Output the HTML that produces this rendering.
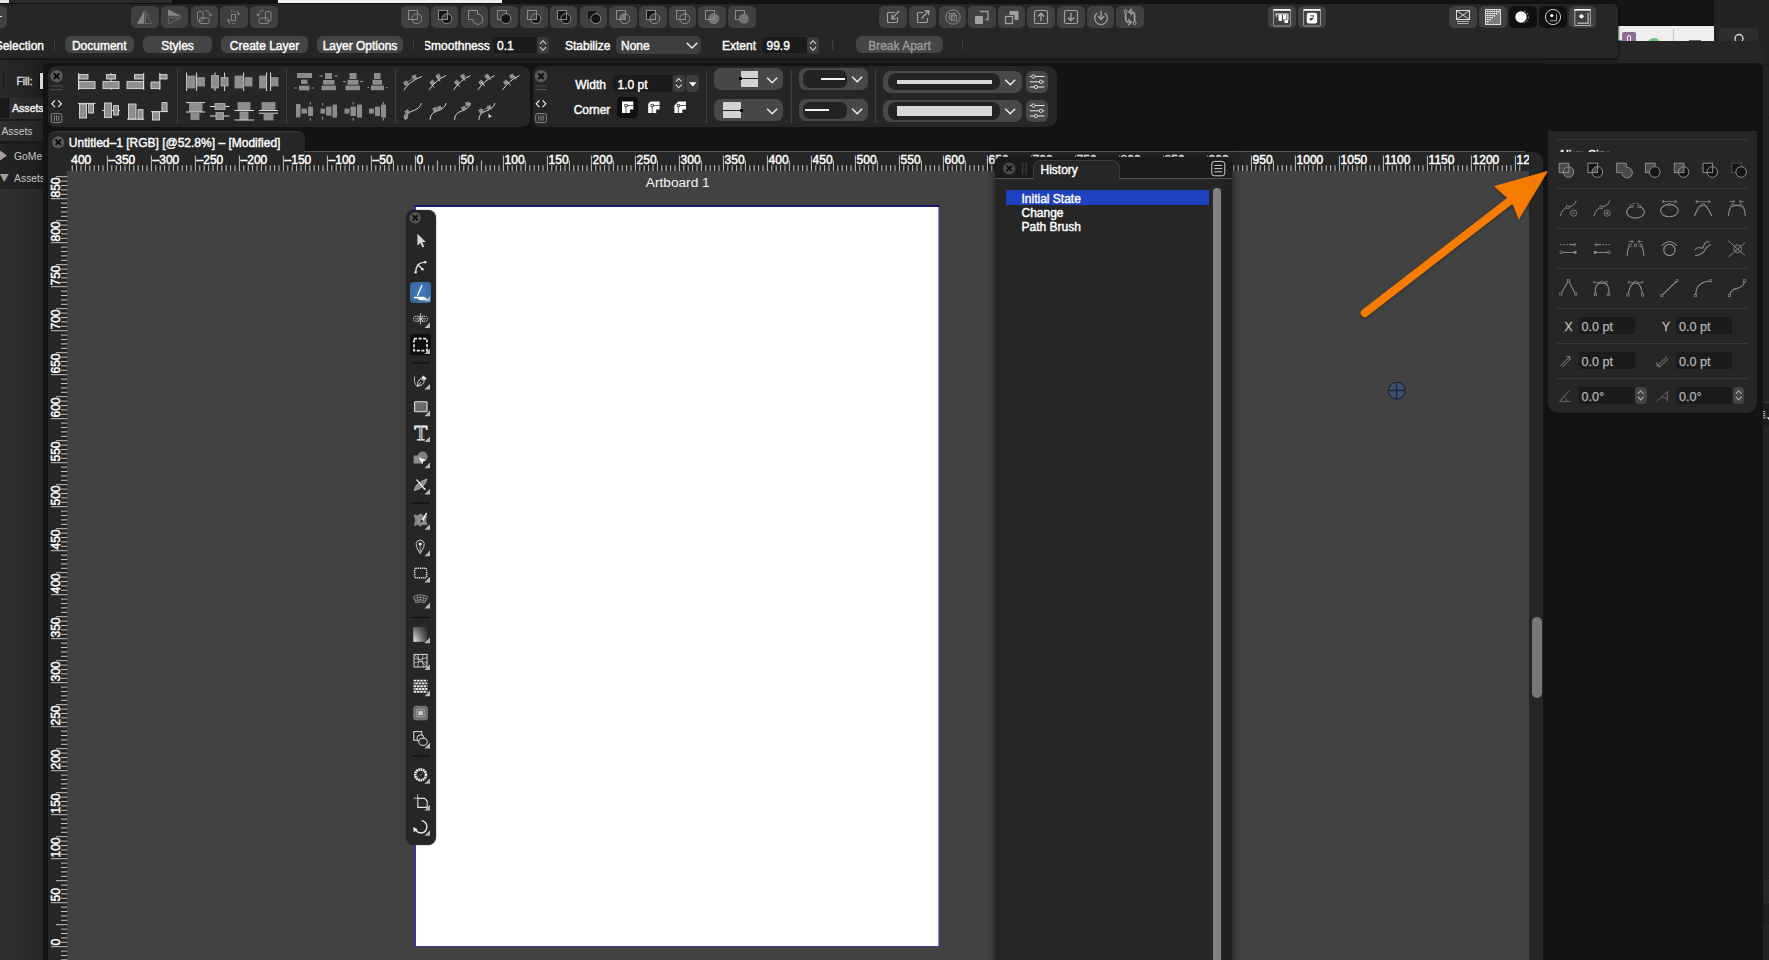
<!DOCTYPE html><html lang="en"><head><meta charset="utf-8"><title>Untitled-1</title><style>
*{box-sizing:border-box;margin:0;padding:0}
html,body{width:1769px;height:960px;overflow:hidden;background:#131313}
body{position:relative;font-family:"Liberation Sans","DejaVu Sans",sans-serif;font-size:12px;font-weight:normal;-webkit-text-stroke-width:.4px;color:#fff;line-height:1}
.a{position:absolute}
.t{position:absolute;white-space:nowrap;line-height:14px;height:14px}
svg{position:absolute;overflow:visible}
.btn{position:absolute;background:#3a3a3a;border-radius:5px}
.pill{position:absolute;background:#454545;border-radius:6px;text-align:center;line-height:14px;height:17px;padding-top:2.9px}
.fld{position:absolute;background:#1b1b1b;line-height:14px;padding-left:4px;padding-top:2.5px;overflow:hidden}
.sep{position:absolute;width:1px;background:#3e3e3e}
</style></head><body>
<div class="a" style="left:1714px;top:0px;width:55px;height:960px;background:#232323;"></div>
<div class="a" style="left:1763px;top:65px;width:6px;height:1px;background:#1a1a1a;"></div>
<div class="a" style="left:1763px;top:117px;width:6px;height:1px;background:#1a1a1a;"></div>
<div class="a" style="left:1763px;top:402px;width:6px;height:24px;background:#1c1c1c;border-top:1px solid #333"></div>
<div class="a" style="left:1763px;top:878px;width:6px;height:24px;background:#282828;border-top:1px solid #1a1a1a"></div>
<div class="a" style="left:1763px;top:902px;width:6px;height:22px;background:#202020;border-top:1px solid #2e2e2e;border-bottom:1px solid #181818"></div>
<div class="a" style="left:1719px;top:28px;width:39px;height:20px;background:#2e2e2e;border-radius:3px 3px 0 0"></div>
<svg style="left:1733px;top:32px" width="12" height="12"><circle cx="6" cy="6.5" r="4" fill="none" stroke="#ddd" stroke-width="1.3"/></svg>
<div class="a" style="left:1617px;top:0px;width:97px;height:26px;background:#151515;"></div>
<div class="a" style="left:1618px;top:25px;width:96px;height:17px;background:#efefef;border-top:1px solid #0c0c0c;overflow:hidden"><div class="a" style="left:4px;top:6px;width:14px;height:14px;background:#8a6c97;border-radius:2px"></div><div class="a" style="left:9px;top:9px;width:4px;height:9px;border:1.5px solid #fff;border-radius:2px"></div><div class="a" style="left:0;top:14px;width:4px;height:3px;background:#3aa0d8"></div><div class="a" style="left:29px;top:12px;width:14px;height:14px;background:#6cc07a;border-radius:7px"></div><div class="a" style="left:55px;top:3px;width:1px;height:14px;background:#c4c4c4"></div><div class="a" style="left:71px;top:14px;width:12px;height:3px;background:#666"></div></div>
<div class="a" style="left:1617px;top:41px;width:146px;height:22px;background:#262626;border-radius:0 6px 0 0"></div>
<div class="a" style="left:1543px;top:63px;width:220px;height:900px;background:#131313;border-radius:0 6px 0 0"></div>
<div class="a" style="left:0px;top:0px;width:1617px;height:4px;background:#121212;"></div>
<div class="a" style="left:0px;top:0px;width:172px;height:3px;background:#2a2a2a;"></div>
<div class="a" style="left:0px;top:0px;width:9px;height:3px;background:#e8e8e8;"></div>
<div class="a" style="left:278px;top:0px;width:224px;height:3px;background:#efefef;"></div>
<div class="a" style="left:0px;top:3.5px;width:1617.5px;height:55px;background:#262626;border-radius:0 5px 5px 0;box-shadow:1px 1px 2px rgba(0,0,0,.6)"></div>
<div class="a" style="left:0px;top:6px;width:7px;height:22px;background:#424242;border-radius:0 5px 5px 0"></div>
<div class="a" style="left:0px;top:15.5px;width:1.5px;height:1.5px;background:#ddd;"></div>
<div class="btn" style="left:131.1px;top:6px;width:27.6px;height:22px;background:#404040"><svg width="28" height="22" viewBox="0 0 28 22" style="left:0;top:0"><path d="M6,17.7 L13,5 L13,17.7Z" fill="#858585"/><path d="M14.5,5.2 L20.7,17.5 L14.5,17.5Z" fill="none" stroke="#666" stroke-width="1"/><path d="M13.7,4.5V18" stroke="#5a5a5a" stroke-width="1"/></svg></div>
<div class="btn" style="left:160.8px;top:6px;width:27.6px;height:22px;background:#404040"><svg width="28" height="22" viewBox="0 0 28 22" style="left:0;top:0"><path d="M7,3.6 L20,9.8 L7,9.8Z" fill="#858585"/><path d="M7.5,12 L19.5,12 L7.5,18Z" fill="none" stroke="#666" stroke-width="1"/><path d="M6,11H21" stroke="#5a5a5a" stroke-width="1"/></svg></div>
<div class="btn" style="left:190.6px;top:6px;width:27.6px;height:22px;background:#404040"><svg width="28" height="22" viewBox="0 0 28 22" style="left:0;top:0"><rect x="6.5" y="5.5" width="5.5" height="9.5" rx="1.5" fill="none" stroke="#858585"/><rect x="8.5" y="12" width="9.5" height="5.5" rx="1.5" fill="none" stroke="#858585"/><path d="M14,4.5 Q18.5,4.5 19.5,9.5" fill="none" stroke="#858585"/><path d="M17.7,8 L19.6,10.2 L21,7.8" fill="none" stroke="#858585"/></svg></div>
<div class="btn" style="left:220.3px;top:6px;width:27.6px;height:22px;background:#404040"><svg width="28" height="22" viewBox="0 0 28 22" style="left:0;top:0"><rect x="11.5" y="8.5" width="4" height="6" fill="none" stroke="#858585"/><path d="M11,5.2H16" stroke="#858585" stroke-dasharray="1.2 1"/><path d="M16.5,5.2 Q18.5,5.5 18.5,8" fill="none" stroke="#858585"/><path d="M16.8,7.3 L18.5,9.7 L20.2,7.3Z" fill="#858585"/><path d="M15.5,17.4H11" stroke="#858585" stroke-dasharray="1.2 1"/><path d="M10.5,17.4 Q8.5,17 8.5,14.5" fill="none" stroke="#858585"/><path d="M6.8,15 L8.5,12.6 L10.2,15Z" fill="#858585"/></svg></div>
<div class="btn" style="left:250.0px;top:6px;width:27.6px;height:22px;background:#404040"><svg width="28" height="22" viewBox="0 0 28 22" style="left:0;top:0"><rect x="15.5" y="5.5" width="5.5" height="9.5" rx="1.5" fill="none" stroke="#858585"/><rect x="9" y="12" width="9.5" height="5.5" rx="1.5" fill="none" stroke="#858585"/><path d="M13.5,4.5 Q9,4.5 8,9.5" fill="none" stroke="#858585"/><path d="M9.8,8 L7.9,10.2 L6.5,7.8" fill="none" stroke="#858585"/></svg></div>
<div class="btn" style="left:401.2px;top:6px;width:27.6px;height:22px;background:#404040"><svg width="28" height="22" viewBox="0 0 28 22" style="left:0;top:0"><rect x="7.5" y="4.5" width="9" height="9" fill="none" stroke="#8c8c8c"/><circle cx="15.8" cy="12.7" r="5" fill="none" stroke="#8c8c8c"/></svg></div>
<div class="btn" style="left:430.9px;top:6px;width:27.6px;height:22px;background:#404040"><svg width="28" height="22" viewBox="0 0 28 22" style="left:0;top:0"><rect x="7.5" y="4.5" width="9" height="9" fill="#141414"/><circle cx="15.8" cy="12.7" r="5" fill="#141414"/><clipPath id="cp76965"><rect x="7.5" y="4.5" width="9" height="9"/></clipPath><circle cx="15.8" cy="12.7" r="5" fill="#404040" clip-path="url(#cp76965)"/><rect x="7.5" y="4.5" width="9" height="9" fill="none" stroke="#8c8c8c"/><circle cx="15.8" cy="12.7" r="5" fill="none" stroke="#8c8c8c"/></svg></div>
<div class="btn" style="left:460.6px;top:6px;width:27.6px;height:22px;background:#404040"><svg width="28" height="22" viewBox="0 0 28 22" style="left:0;top:0"><path d="M7.5,4.5 H16.5 V8.35 A5,5 0 1 1 11.8,13.5 H7.5Z" fill="none" stroke="#8c8c8c"/></svg></div>
<div class="btn" style="left:490.4px;top:6px;width:27.6px;height:22px;background:#404040"><svg width="28" height="22" viewBox="0 0 28 22" style="left:0;top:0"><rect x="7.5" y="4.5" width="9" height="9" fill="none" stroke="#8c8c8c"/><circle cx="15.8" cy="12.7" r="5" fill="#141414"/><circle cx="15.8" cy="12.7" r="5" fill="none" stroke="#8c8c8c"/></svg></div>
<div class="btn" style="left:520.1px;top:6px;width:27.6px;height:22px;background:#404040"><svg width="28" height="22" viewBox="0 0 28 22" style="left:0;top:0"><circle cx="15.8" cy="12.7" r="5" fill="#141414"/><clipPath id="cp12761"><rect x="7.5" y="4.5" width="9" height="9"/></clipPath><circle cx="15.8" cy="12.7" r="5" fill="#404040" clip-path="url(#cp12761)"/><rect x="7.5" y="4.5" width="9" height="9" fill="none" stroke="#8c8c8c"/><circle cx="15.8" cy="12.7" r="5" fill="none" stroke="#8c8c8c"/></svg></div>
<div class="btn" style="left:549.8px;top:6px;width:27.6px;height:22px;background:#404040"><svg width="28" height="22" viewBox="0 0 28 22" style="left:0;top:0"><rect x="7.5" y="4.5" width="9" height="9" fill="#141414"/><circle cx="15.8" cy="12.7" r="5" fill="#141414"/><rect x="7.5" y="4.5" width="9" height="9" fill="none" stroke="#8c8c8c"/><circle cx="15.8" cy="12.7" r="5" fill="none" stroke="#8c8c8c"/></svg></div>
<div class="btn" style="left:579.5px;top:6px;width:27.6px;height:22px;background:#404040"><svg width="28" height="22" viewBox="0 0 28 22" style="left:0;top:0"><rect x="7.5" y="4.5" width="9" height="9" fill="#141414"/><rect x="7.5" y="4.5" width="9" height="9" fill="none" stroke="#4a4a4a"/><circle cx="15.8" cy="12.7" r="5" fill="#141414"/><circle cx="15.8" cy="12.7" r="5" fill="none" stroke="#8c8c8c"/></svg></div>
<div class="btn" style="left:609.2px;top:6px;width:27.6px;height:22px;background:#404040"><svg width="28" height="22" viewBox="0 0 28 22" style="left:0;top:0"><clipPath id="cp74125"><rect x="7.5" y="4.5" width="9" height="9"/></clipPath><circle cx="15.8" cy="12.7" r="5" fill="#757575" clip-path="url(#cp74125)"/><rect x="7.5" y="4.5" width="9" height="9" fill="none" stroke="#8c8c8c"/><circle cx="15.8" cy="12.7" r="5" fill="none" stroke="#8c8c8c"/></svg></div>
<div class="btn" style="left:639.0px;top:6px;width:27.6px;height:22px;background:#404040"><svg width="28" height="22" viewBox="0 0 28 22" style="left:0;top:0"><rect x="7.5" y="4.5" width="9" height="9" fill="#141414"/><clipPath id="cp89127"><rect x="7.5" y="4.5" width="9" height="9"/></clipPath><circle cx="15.8" cy="12.7" r="5" fill="#404040" clip-path="url(#cp89127)"/><rect x="7.5" y="4.5" width="9" height="9" fill="none" stroke="#8c8c8c"/><circle cx="15.8" cy="12.7" r="5" fill="none" stroke="#8c8c8c"/></svg></div>
<div class="btn" style="left:668.7px;top:6px;width:27.6px;height:22px;background:#404040"><svg width="28" height="22" viewBox="0 0 28 22" style="left:0;top:0"><rect x="7.5" y="4.5" width="9" height="9" fill="none" stroke="#8c8c8c"/><circle cx="15.8" cy="12.7" r="5" fill="none" stroke="#8c8c8c"/></svg></div>
<div class="btn" style="left:698.4px;top:6px;width:27.6px;height:22px;background:#404040"><svg width="28" height="22" viewBox="0 0 28 22" style="left:0;top:0"><circle cx="15.8" cy="12.7" r="5" fill="#757575"/><rect x="7.5" y="4.5" width="9" height="9" fill="none" stroke="#8c8c8c"/><circle cx="15.8" cy="12.7" r="5" fill="none" stroke="#7d7d7d"/></svg></div>
<div class="btn" style="left:728.1px;top:6px;width:27.6px;height:22px;background:#404040"><svg width="28" height="22" viewBox="0 0 28 22" style="left:0;top:0"><rect x="7.5" y="4.5" width="9" height="9" fill="none" stroke="#8c8c8c"/><circle cx="15.8" cy="12.7" r="5" fill="#757575"/></svg></div>
<div class="btn" style="left:879.2px;top:6px;width:27.6px;height:22px;background:#404040"><svg width="28" height="22" viewBox="0 0 28 22" style="left:0;top:0"><path d="M16,6.5H9.5Q8.5,6.5 8.5,7.5V15.5Q8.5,16.5 9.5,16.5H17.5Q18.5,16.5 18.5,15.5V11" fill="none" stroke="#a0a0a0" stroke-width="1.2"/><path d="M20,5 L13,12.5 M12.8,8.5V12.8H17" fill="none" stroke="#a0a0a0" stroke-width="1.3"/></svg></div>
<div class="btn" style="left:908.8px;top:6px;width:27.6px;height:22px;background:#404040"><svg width="28" height="22" viewBox="0 0 28 22" style="left:0;top:0"><path d="M14,6.5H9.5Q8.5,6.5 8.5,7.5V15.5Q8.5,16.5 9.5,16.5H17.5Q18.5,16.5 18.5,15.5V12" fill="none" stroke="#a0a0a0" stroke-width="1.2"/><path d="M12.5,12.5 L19.5,5.2 M15.5,5H19.7V9.2" fill="none" stroke="#a0a0a0" stroke-width="1.3"/></svg></div>
<div class="btn" style="left:938.5px;top:6px;width:27.6px;height:22px;background:#404040"><svg width="28" height="22" viewBox="0 0 28 22" style="left:0;top:0"><circle cx="14" cy="11" r="7.2" fill="none" stroke="#a0a0a0" stroke-width="0.8"/><rect x="10.2" y="7.4" width="5.6" height="5.6" fill="none" stroke="#a0a0a0" stroke-width="0.7"/><rect x="12.2" y="9.2" width="5.6" height="5.6" fill="none" stroke="#a0a0a0" stroke-width="0.7"/><path d="M10.2,10.2H15.8M13,7.4V13" stroke="#a0a0a0" stroke-width="0.5"/></svg></div>
<div class="btn" style="left:968.1px;top:6px;width:27.6px;height:22px;background:#404040"><svg width="28" height="22" viewBox="0 0 28 22" style="left:0;top:0"><rect x="7" y="10" width="8" height="8" rx="1" fill="#a0a0a0"/><path d="M12,5.5H20V13.5H17.5" fill="none" stroke="#a0a0a0" stroke-width="1.3"/></svg></div>
<div class="btn" style="left:997.7px;top:6px;width:27.6px;height:22px;background:#404040"><svg width="28" height="22" viewBox="0 0 28 22" style="left:0;top:0"><rect x="7.5" y="10.5" width="7" height="7" fill="none" stroke="#a0a0a0" stroke-width="1.3"/><path d="M11.5,5H20.5V14H16.5V9H11.5Z" fill="#a0a0a0"/></svg></div>
<div class="btn" style="left:1027.4px;top:6px;width:27.6px;height:22px;background:#404040"><svg width="28" height="22" viewBox="0 0 28 22" style="left:0;top:0"><rect x="7.5" y="4.5" width="13" height="13" rx="1.5" fill="none" stroke="#a0a0a0" stroke-width="1.2"/><path d="M14,15V7.5M10.8,10.5L14,7.2L17.2,10.5" fill="none" stroke="#a0a0a0" stroke-width="1.4"/></svg></div>
<div class="btn" style="left:1057.0px;top:6px;width:27.6px;height:22px;background:#404040"><svg width="28" height="22" viewBox="0 0 28 22" style="left:0;top:0"><rect x="7.5" y="4.5" width="13" height="13" rx="1.5" fill="none" stroke="#a0a0a0" stroke-width="1.2"/><path d="M14,7V14.5M10.8,11.5L14,14.8L17.2,11.5" fill="none" stroke="#a0a0a0" stroke-width="1.4"/></svg></div>
<div class="btn" style="left:1086.6px;top:6px;width:27.6px;height:22px;background:#404040"><svg width="28" height="22" viewBox="0 0 28 22" style="left:0;top:0"><path d="M10.5,7 A6.3,6.3 0 1 0 17.5,7" fill="none" stroke="#a0a0a0" stroke-width="1.3"/><path d="M14,4.5V13M10.8,10L14,13.5L17.2,10" fill="none" stroke="#a0a0a0" stroke-width="1.4"/></svg></div>
<div class="btn" style="left:1116.2px;top:6px;width:27.6px;height:22px;background:#404040"><svg width="28" height="22" viewBox="0 0 28 22" style="left:0;top:0"><circle cx="9.6" cy="5.2" r="1.5" fill="none" stroke="#a0a0a0"/><circle cx="18.6" cy="17" r="1.5" fill="none" stroke="#a0a0a0"/><path d="M9.6,6.8V12.5Q9.6,16.2 13.6,16.2M18.6,15.4V9.5Q18.6,5.8 14.6,5.8" fill="none" stroke="#a0a0a0" stroke-width="1.7"/><path d="M12.2,13.2L15.2,16.2L12.2,19.2M16,2.8L13,5.8L16,8.8" fill="none" stroke="#a0a0a0" stroke-width="1.6"/></svg></div>
<div class="btn" style="left:1268.2px;top:6px;width:27.6px;height:22px;background:#404040"><svg width="28" height="22" viewBox="0 0 28 22" style="left:0;top:0"><rect x="5.5" y="3.5" width="17" height="16.5" rx="1" fill="none" stroke="#9a9a9a"/><rect x="5.5" y="3" width="17" height="1.8" fill="#ffffff"/><rect x="7.5" y="7.5" width="13" height="1" fill="#ffffff"/><path d="M7.5,8.5 H9 L8.3,12Z" fill="#ffffff"/><rect x="10.5" y="8.5" width="3.5" height="6.5" fill="#ffffff"/><rect x="15" y="8.5" width="3.5" height="5" fill="#ffffff"/><rect x="16.5" y="14" width="3.5" height="3" fill="#ffffff"/><rect x="19.3" y="8.5" width="1.2" height="6" fill="#ffffff"/></svg></div>
<div class="btn" style="left:1298.2px;top:6px;width:27.6px;height:22px;background:#404040"><svg width="28" height="22" viewBox="0 0 28 22" style="left:0;top:0"><rect x="5.5" y="3.5" width="17" height="16.5" rx="1" fill="none" stroke="#9a9a9a"/><rect x="5.5" y="3" width="17" height="1.8" fill="#ffffff"/><rect x="8.8" y="6.8" width="10.4" height="10.6" rx="2.2" fill="#ffffff"/><path d="M11.5,13 Q13,11 15.5,11.5 Q15,14.5 12,14.5Z" fill="#333"/><path d="M12.5,9.8H15.5V11" fill="none" stroke="#333" stroke-width="0.9"/></svg></div>
<div class="btn" style="left:1449.3px;top:6px;width:27.6px;height:22px;background:#404040"><svg width="28" height="22" viewBox="0 0 28 22" style="left:0;top:0"><rect x="7.5" y="4.5" width="13" height="9" fill="none" stroke="#ddd"/><path d="M7.5,4.5L20.5,13.5M20.5,4.5L7.5,13.5" stroke="#ddd" stroke-width="0.9"/><path d="M8,15.5H20M8.5,17.5H19.5" stroke="#bbb" stroke-width="0.9"/></svg></div>
<div class="btn" style="left:1479px;top:6px;width:27.6px;height:22px;background:#404040"><svg width="28" height="22" viewBox="0 0 28 22" style="left:0;top:0"><rect x="6.5" y="3.5" width="15" height="15" fill="#7a7a7a" stroke="#ddd"/><path d="M7,4H21L7,17Z" fill="#404040"/><path d="M7,5.5H20.5" stroke="#e8e8e8" stroke-width="0.8"/><path d="M7,7.5H18.3" stroke="#e8e8e8" stroke-width="0.8"/><path d="M7,9.5H16.1" stroke="#e8e8e8" stroke-width="0.8"/><path d="M7,11.5H13.899999999999999" stroke="#e8e8e8" stroke-width="0.8"/><path d="M7,13.5H11.7" stroke="#e8e8e8" stroke-width="0.8"/><path d="M7,15.5H9.5" stroke="#e8e8e8" stroke-width="0.8"/><path d="M8.8,4V17" stroke="#e8e8e8" stroke-width="0.8"/><path d="M11.0,4V15" stroke="#e8e8e8" stroke-width="0.8"/><path d="M13.200000000000001,4V13" stroke="#e8e8e8" stroke-width="0.8"/><path d="M15.400000000000002,4V11" stroke="#e8e8e8" stroke-width="0.8"/><path d="M17.6,4V9" stroke="#e8e8e8" stroke-width="0.8"/><path d="M19.8,4V7" stroke="#e8e8e8" stroke-width="0.8"/></svg></div>
<div class="btn" style="left:1509.3px;top:6px;width:27.6px;height:22px;background:#101010"><svg width="28" height="22" viewBox="0 0 28 22" style="left:0;top:0"><circle cx="12" cy="11" r="5.7" fill="#ffffff"/><path d="M15,5.2 A6,6 0 0 1 15,16.8" fill="none" stroke="#aaa" stroke-width="0.9" stroke-dasharray="2 1.6"/></svg></div>
<div class="btn" style="left:1539.2px;top:6px;width:27.6px;height:22px;background:#101010"><svg width="28" height="22" viewBox="0 0 28 22" style="left:0;top:0"><circle cx="14" cy="11" r="7.6" fill="none" stroke="#e0e0e0" stroke-width="0.9"/><circle cx="12.8" cy="9.5" r="1.6" fill="#ffffff"/><path d="M11,14.8H17.5V8" fill="none" stroke="#aaa" stroke-width="1"/></svg></div>
<div class="btn" style="left:1568.9px;top:6px;width:27.6px;height:22px;background:#404040"><svg width="28" height="22" viewBox="0 0 28 22" style="left:0;top:0"><rect x="5.8" y="3.5" width="15.5" height="16" fill="none" stroke="#b0b0b0"/><rect x="5.5" y="3" width="16" height="1.6" fill="#ffffff"/><circle cx="12.5" cy="10.3" r="2.1" fill="#ffffff"/><path d="M8.5,17.2H19V7" fill="none" stroke="#aaa" stroke-width="1.4"/></svg></div>
<div class="t" style="left:-20px;top:39px;width:64px;text-align:right">Selection</div>
<div class="sep" style="left:53.5px;top:39px;height:11px;background:#3e3e3e"></div>
<div class="pill" style="left:65px;top:36px;width:68.5px;color:#fff">Document</div>
<div class="pill" style="left:143px;top:36px;width:69px;color:#fff">Styles</div>
<div class="pill" style="left:221px;top:36px;width:87px;color:#fff">Create Layer</div>
<div class="pill" style="left:317px;top:36px;width:86px;color:#fff">Layer Options</div>
<div class="sep" style="left:412.5px;top:39px;height:11px;background:#3e3e3e"></div>
<div class="a" style="left:424.6px;top:36px;width:70px;height:18px;overflow:hidden"><div class="t" style="left:-1.5px;top:3px">Smoothness</div></div>
<div class="fld" style="left:493px;top:36.5px;width:44px;height:16.5px">0.1</div>
<div class="a" style="left:537px;top:36.5px;width:12px;height:17px;background:#3c3c3c;border-radius:4px"><svg width="12" height="17" viewBox="0 0 12 17" style="left:0;top:0"><path d="M3,7 L6,3.7 L9,7 M3,10 L6,13.3 L9,10" fill="none" stroke="#ddd" stroke-width="1.1"/></svg></div>
<div class="t" style="left:565px;top:39px;">Stabilize</div>
<div class="a" style="left:616px;top:36px;width:85px;height:17.5px;background:#3e3e3e;border-radius:5px"></div>
<div class="t" style="left:621px;top:39px;">None</div>
<svg style="left:685.6px;top:41.6px" width="12" height="7" viewBox="0 0 12 7"><path d="M0.7,0.7 L6,6 L11.3,0.7" fill="none" stroke="#eee" stroke-width="1.4"/></svg>
<div class="t" style="left:722px;top:39px;">Extent</div>
<div class="fld" style="left:762.5px;top:36.5px;width:44.5px;height:16.5px">99.9</div>
<div class="a" style="left:807px;top:36.5px;width:12px;height:17px;background:#3c3c3c;border-radius:4px"><svg width="12" height="17" viewBox="0 0 12 17" style="left:0;top:0"><path d="M3,7 L6,3.7 L9,7 M3,10 L6,13.3 L9,10" fill="none" stroke="#ddd" stroke-width="1.1"/></svg></div>
<div class="sep" style="left:831.5px;top:39px;height:11px;background:#3e3e3e"></div>
<div class="pill" style="left:856px;top:36px;width:87px;color:#9a9a9a">Break Apart</div>
<div class="sep" style="left:961.5px;top:39px;height:11px;background:#3e3e3e"></div>
<div class="a" style="left:42.5px;top:58px;width:1575px;height:5.5px;background:#1e1e1e;"></div>
<div class="a" style="left:43.5px;top:63px;width:1500px;height:70px;background:#131313;border-radius:4px 0 0 0"></div>
<div class="a" style="left:0;top:59px;width:42.5px;height:901px;overflow:hidden;background:linear-gradient(90deg,#313131 0%,#2d2d2d 55%,#262626 100%)">
<div class="a" style="left:0;top:0;width:43px;height:39px;background:linear-gradient(90deg,#2a2a2a,#222 70%,#1c1c1c)"></div>
<div class="a" style="left:3px;top:13px;width:1px;height:18px;background:#191919"></div>
<div class="t" style="left:16.4px;top:16.2px;font-size:10.4px;color:#e2e2e2;-webkit-text-stroke-width:.3px">Fill:</div>
<div class="a" style="left:38.5px;top:12.5px;width:5px;height:18px;background:#dcdcdc;border:1px solid #111;border-right:0"></div>
<div class="a" style="left:0;top:39px;width:8.5px;height:20px;background:#1b1b1b;border-right:1px solid #111"></div>
<div class="a" style="left:9px;top:39px;width:34px;height:21px;background:linear-gradient(90deg,#2e2e2e,#262626)"></div>
<div class="t" style="left:12px;top:42px;font-size:10.6px;color:#f0f0f0">Assets</div>
<div class="a" style="left:0;top:59.5px;width:43px;height:2.5px;background:#1a1a1a"></div>
<div class="a" style="left:0;top:62px;width:43px;height:20px;background:linear-gradient(90deg,#303030,#282828 70%,#222)"></div>
<div class="t" style="left:1.5px;top:66px;-webkit-text-stroke-width:0;font-size:10.3px;color:#ccc">Assets</div>
<div class="a" style="left:0;top:82px;width:43px;height:2.5px;background:#1a1a1a"></div>
<div class="a" style="left:0;top:84.5px;width:43px;height:45px;background:linear-gradient(90deg,#232323,#202020 70%,#1b1b1b)"></div>
<svg style="left:0;top:91px" width="9" height="12"><path d="M0,0.5 L7,5.5 L0,10.5Z" fill="#a0a0a0"/></svg>
<svg style="left:0;top:115px" width="10" height="9"><path d="M0,0 L8.8,0 L4.2,8Z" fill="#a0a0a0"/></svg>
<div class="t" style="left:14px;top:91px;-webkit-text-stroke-width:0;font-size:10.4px;color:#c6c6c6">GoMe</div>
<div class="t" style="left:14px;top:113px;-webkit-text-stroke-width:0;font-size:10.4px;color:#c6c6c6">Assets</div>
</div>
<div class="a" style="left:0;top:57.8px;width:1616px;height:1.8px;background:#151515"></div>
<div class="a" style="left:48px;top:66.2px;width:482px;height:60.6px;background:#262626;border-radius:8px"></div>
<div class="a" style="left:532.5px;top:66.2px;width:524.3px;height:60.6px;background:#262626;border-radius:8px 10px 10px 8px"></div>
<svg style="left:0;top:0" width="1100" height="130" viewBox="0 0 1100 130"><circle cx="56.6" cy="76.2" r="6.2" fill="#5a5a5a"/><path d="M53.800000000000004,73.4 L59.4,79.0 M59.4,73.4 L53.800000000000004,79.0" stroke="#0c0c0c" stroke-width="1.9"/><path d="M50.6,86H62.6M50.6,89.6H62.6" stroke="#4c4c4c" stroke-width="1.2"/><path d="M55.0,100.4 L51.800000000000004,103.8 L55.0,107.2 M58.2,100.4 L61.4,103.8 L58.2,107.2" fill="none" stroke="#f0f0f0" stroke-width="1.2"/><rect x="51.300000000000004" y="113.6" width="10.6" height="9" rx="2" fill="none" stroke="#8c8c8c" stroke-width="1"/><path d="M54.4,115.5V120.8M56.6,115.5V120.8M58.800000000000004,115.5V120.8" stroke="#8c8c8c" stroke-width="1"/><path d="M78.5,73V90" stroke="#dcdcdc" stroke-width="1"/><rect x="79" y="74.6" width="9" height="4.4" fill="#8e8e8e" stroke="#dcdcdc" stroke-width="0.9"/><rect x="79" y="81.6" width="16" height="7.0" fill="#8e8e8e" stroke="#dcdcdc" stroke-width="0.9"/><path d="M111,73V90" stroke="#dcdcdc" stroke-width="1"/><rect x="106.5" y="74.6" width="9.0" height="4.4" fill="#8e8e8e" stroke="#dcdcdc" stroke-width="0.9"/><rect x="103" y="81.6" width="16" height="7.0" fill="#8e8e8e" stroke="#dcdcdc" stroke-width="0.9"/><path d="M143.7,73V90" stroke="#dcdcdc" stroke-width="1"/><rect x="134.5" y="74.6" width="9.0" height="4.4" fill="#8e8e8e" stroke="#dcdcdc" stroke-width="0.9"/><rect x="127" y="81.6" width="16.5" height="7.0" fill="#8e8e8e" stroke="#dcdcdc" stroke-width="0.9"/><path d="M159.8,73V90" stroke="#dcdcdc" stroke-width="1"/><rect x="160" y="74.6" width="7" height="4.4" fill="#8e8e8e" stroke="#dcdcdc" stroke-width="0.9"/><rect x="151" y="82" width="8.8" height="6.6" fill="#8e8e8e" stroke="#dcdcdc" stroke-width="0.9"/><path d="M78,103.4H95.5" stroke="#dcdcdc" stroke-width="1"/><rect x="79.5" y="104" width="7.0" height="14" fill="#8e8e8e" stroke="#dcdcdc" stroke-width="0.9"/><rect x="88.7" y="104" width="4.8" height="9" fill="#8e8e8e" stroke="#dcdcdc" stroke-width="0.9"/><path d="M102,110.5H120" stroke="#dcdcdc" stroke-width="1"/><rect x="104.5" y="103" width="7.0" height="14.6" fill="#8e8e8e" stroke="#dcdcdc" stroke-width="0.9"/><rect x="113.7" y="105.6" width="4.8" height="9.4" fill="#8e8e8e" stroke="#dcdcdc" stroke-width="0.9"/><path d="M127,119.2H144.2" stroke="#dcdcdc" stroke-width="1"/><rect x="128.5" y="104" width="7.5" height="15" fill="#8e8e8e" stroke="#dcdcdc" stroke-width="0.9"/><rect x="138" y="109.6" width="5" height="9.4" fill="#8e8e8e" stroke="#dcdcdc" stroke-width="0.9"/><path d="M151,111.6H168" stroke="#dcdcdc" stroke-width="1"/><rect x="162" y="102.6" width="5" height="8.8" fill="#8e8e8e" stroke="#dcdcdc" stroke-width="0.9"/><rect x="152.5" y="111.8" width="7.0" height="8.2" fill="#8e8e8e" stroke="#dcdcdc" stroke-width="0.9"/><path d="M186.6,72.5V91" stroke="#dcdcdc" stroke-width="1"/><path d="M196.6,72.5V91" stroke="#dcdcdc" stroke-width="1"/><rect x="187.3" y="76" width="7.7" height="12" fill="#8e8e8e" stroke="#8e8e8e" stroke-width="0.9"/><rect x="197.5" y="77.6" width="7.0" height="8.4" fill="#8e8e8e" stroke="#8e8e8e" stroke-width="0.9"/><path d="M215,72.5V91" stroke="#dcdcdc" stroke-width="1"/><path d="M224.6,72.5V91" stroke="#dcdcdc" stroke-width="1"/><rect x="211.5" y="75.6" width="7.0" height="12.4" fill="#8e8e8e" stroke="#aaa" stroke-width="0.9"/><rect x="221" y="77.6" width="7" height="8.4" fill="#8e8e8e" stroke="#aaa" stroke-width="0.9"/><path d="M243.6,72.5V91" stroke="#dcdcdc" stroke-width="1"/><rect x="235" y="76" width="8" height="12" fill="#8e8e8e" stroke="#8e8e8e" stroke-width="0.9"/><rect x="245" y="77.6" width="7" height="8.4" fill="#8e8e8e" stroke="#8e8e8e" stroke-width="0.9"/><path d="M266.6,72.5V91" stroke="#dcdcdc" stroke-width="1"/><path d="M270.6,72.5V91" stroke="#dcdcdc" stroke-width="1"/><rect x="259.5" y="76" width="6.5" height="12" fill="#8e8e8e" stroke="#8e8e8e" stroke-width="0.9"/><rect x="271.3" y="77.6" width="6.7" height="8.4" fill="#8e8e8e" stroke="#8e8e8e" stroke-width="0.9"/><path d="M186,102.6H205" stroke="#dcdcdc" stroke-width="1"/><rect x="189.5" y="103.2" width="12.5" height="8.2" fill="#8e8e8e" stroke="#8e8e8e" stroke-width="0.9"/><path d="M186,112H205" stroke="#dcdcdc" stroke-width="1"/><rect x="191" y="113" width="8" height="6.6" fill="#8e8e8e" stroke="#8e8e8e" stroke-width="0.9"/><path d="M210,106.5H229.5" stroke="#dcdcdc" stroke-width="1"/><rect x="215" y="103.4" width="10" height="6.2" fill="#8e8e8e" stroke="#b0b0b0" stroke-width="0.9"/><path d="M210,116H229.5" stroke="#dcdcdc" stroke-width="1"/><rect x="216" y="112.6" width="7.5" height="6.8" fill="#8e8e8e" stroke="#b0b0b0" stroke-width="0.9"/><rect x="238" y="102.6" width="12" height="7.4" fill="#8e8e8e" stroke="#8e8e8e" stroke-width="0.9"/><path d="M234.5,110.5H254" stroke="#dcdcdc" stroke-width="1"/><rect x="240" y="112" width="8" height="7.4" fill="#8e8e8e" stroke="#8e8e8e" stroke-width="0.9"/><path d="M234.5,120H254" stroke="#dcdcdc" stroke-width="1"/><rect x="262" y="102.6" width="13" height="7.2" fill="#8e8e8e" stroke="#8e8e8e" stroke-width="0.9"/><path d="M259,110.5H278" stroke="#dcdcdc" stroke-width="1"/><path d="M259,113.2H278" stroke="#dcdcdc" stroke-width="1"/><rect x="264" y="114.2" width="9" height="5.8" fill="#8e8e8e" stroke="#8e8e8e" stroke-width="0.9"/><rect x="297" y="73" width="15" height="5" fill="#8c8c8c" stroke="none" stroke-width="0.9"/><rect x="301" y="79.6" width="6.5" height="4.4" fill="#8c8c8c" stroke="none" stroke-width="0.9"/><rect x="299" y="85.6" width="10.5" height="4.8" fill="#8c8c8c" stroke="none" stroke-width="0.9"/><path d="M294.5,88H296.7" stroke="#9a9a9a" stroke-width="1"/><path d="M311.5,88H313.7" stroke="#9a9a9a" stroke-width="1"/><rect x="325" y="73" width="7" height="6" fill="#8c8c8c" stroke="none" stroke-width="0.9"/><rect x="323" y="80" width="11.5" height="4.6" fill="#8c8c8c" stroke="none" stroke-width="0.9"/><rect x="321.5" y="85.6" width="14.5" height="4.6" fill="#8c8c8c" stroke="none" stroke-width="0.9"/><path d="M319.5,76H323" stroke="#9a9a9a" stroke-width="1"/><path d="M334.5,76H338" stroke="#9a9a9a" stroke-width="1"/><rect x="349.5" y="73" width="7.0" height="6" fill="#8c8c8c" stroke="none" stroke-width="0.9"/><rect x="347.5" y="79.8" width="11.0" height="5.0" fill="#8c8c8c" stroke="none" stroke-width="0.9"/><rect x="345.5" y="85.6" width="14.5" height="4.6" fill="#8c8c8c" stroke="none" stroke-width="0.9"/><path d="M343,81.6H346" stroke="#9a9a9a" stroke-width="1"/><path d="M360,81.6H363" stroke="#9a9a9a" stroke-width="1"/><rect x="374" y="73" width="6.5" height="6" fill="#8c8c8c" stroke="none" stroke-width="0.9"/><rect x="372.5" y="79.8" width="9.5" height="5.0" fill="#8c8c8c" stroke="none" stroke-width="0.9"/><rect x="371" y="85.6" width="13" height="4.6" fill="#8c8c8c" stroke="none" stroke-width="0.9"/><path d="M367.5,87.5H369" stroke="#9a9a9a" stroke-width="1"/><path d="M386,87.5H387.5" stroke="#9a9a9a" stroke-width="1"/><rect x="296" y="104" width="4.5" height="13.4" fill="#8c8c8c" stroke="none" stroke-width="0.9"/><rect x="301.5" y="108.6" width="5.5" height="5.0" fill="#8c8c8c" stroke="none" stroke-width="0.9"/><rect x="308" y="106.6" width="5" height="9.4" fill="#8c8c8c" stroke="none" stroke-width="0.9"/><path d="M310.3,102V104.6" stroke="#9a9a9a" stroke-width="1"/><path d="M310.3,118V120.6" stroke="#9a9a9a" stroke-width="1"/><rect x="320.5" y="108.6" width="4.5" height="5.0" fill="#8c8c8c" stroke="none" stroke-width="0.9"/><rect x="326" y="106.6" width="5.5" height="9.0" fill="#8c8c8c" stroke="none" stroke-width="0.9"/><rect x="332.5" y="104.6" width="4.5" height="13.0" fill="#8c8c8c" stroke="none" stroke-width="0.9"/><path d="M322.6,103V105.6" stroke="#9a9a9a" stroke-width="1"/><path d="M322.6,116.6V119.6" stroke="#9a9a9a" stroke-width="1"/><rect x="344.5" y="108.6" width="5.0" height="5.0" fill="#8c8c8c" stroke="none" stroke-width="0.9"/><rect x="350.5" y="106.6" width="5.5" height="9.4" fill="#8c8c8c" stroke="none" stroke-width="0.9"/><rect x="357" y="104.6" width="5" height="13.0" fill="#8c8c8c" stroke="none" stroke-width="0.9"/><path d="M353.2,102V104.6" stroke="#9a9a9a" stroke-width="1"/><path d="M353.2,118V120.6" stroke="#9a9a9a" stroke-width="1"/><rect x="369" y="108.6" width="5" height="5.0" fill="#8c8c8c" stroke="none" stroke-width="0.9"/><rect x="375" y="106.6" width="5" height="9.4" fill="#8c8c8c" stroke="none" stroke-width="0.9"/><rect x="381" y="104.6" width="5" height="13.0" fill="#8c8c8c" stroke="none" stroke-width="0.9"/><path d="M383.3,102V104.6" stroke="#9a9a9a" stroke-width="1"/><path d="M383.3,118V120.6" stroke="#9a9a9a" stroke-width="1"/><path d="M404.0,90.3 Q408.5,81.8 422.0,76.4" fill="none" stroke="#d4d4d4" stroke-width="1"/><path d="M407.0,82.4 L413.5,77.6" stroke="#999" stroke-width="0.7"/><rect x="-1.8" y="-1.8" width="3.6" height="3.6" fill="#8e8e8e" stroke="#a4a4a4" stroke-width="0.5" transform="translate(405.9,83.2) rotate(-30)"/><rect x="-1.8" y="-1.8" width="3.6" height="3.6" fill="#8e8e8e" stroke="#a4a4a4" stroke-width="0.5" transform="translate(414.4,77.2) rotate(-25)"/><path d="M429.09999999999997,89.8 Q436.2,79.8 445.9,75.6" fill="none" stroke="#d4d4d4" stroke-width="1"/><rect x="-1.8" y="-1.8" width="3.6" height="3.6" fill="#8e8e8e" stroke="#a4a4a4" stroke-width="0.5" transform="translate(432.3,82.4) rotate(-35)"/><rect x="-1.8" y="-1.8" width="3.6" height="3.6" fill="#8e8e8e" stroke="#a4a4a4" stroke-width="0.5" transform="translate(438.3,76.4) rotate(-32)"/><path d="M431.15,83.63 L434.35,87.73" stroke="#d4d4d4" stroke-width="0.8"/><path d="M436.95,77.3 L440.15,81.39" stroke="#d4d4d4" stroke-width="0.8"/><path d="M453.59999999999997,89.8 Q460.7,79.8 470.4,75.6" fill="none" stroke="#d4d4d4" stroke-width="1"/><rect x="-1.8" y="-1.8" width="3.6" height="3.6" fill="#8e8e8e" stroke="#a4a4a4" stroke-width="0.5" transform="translate(456.8,82.4) rotate(-35)"/><rect x="-1.8" y="-1.8" width="3.6" height="3.6" fill="#8e8e8e" stroke="#a4a4a4" stroke-width="0.5" transform="translate(462.8,76.4) rotate(-32)"/><path d="M456.55,82.91 L459.75,87.01" stroke="#d4d4d4" stroke-width="0.8"/><path d="M462.35,76.67 L465.55,80.76" stroke="#d4d4d4" stroke-width="0.8"/><path d="M477.9,89.8 Q485.0,79.8 494.7,75.6" fill="none" stroke="#d4d4d4" stroke-width="1"/><rect x="-1.8" y="-1.8" width="3.6" height="3.6" fill="#8e8e8e" stroke="#a4a4a4" stroke-width="0.5" transform="translate(481.1,82.4) rotate(-35)"/><rect x="-1.8" y="-1.8" width="3.6" height="3.6" fill="#8e8e8e" stroke="#a4a4a4" stroke-width="0.5" transform="translate(487.1,76.4) rotate(-32)"/><path d="M481.75,82.19 L484.95,86.29" stroke="#d4d4d4" stroke-width="0.8"/><path d="M487.55,76.04 L490.75,80.13" stroke="#d4d4d4" stroke-width="0.8"/><path d="M502.59999999999997,89.8 Q509.7,79.8 519.4,75.6" fill="none" stroke="#d4d4d4" stroke-width="1"/><rect x="-1.8" y="-1.8" width="3.6" height="3.6" fill="#8e8e8e" stroke="#a4a4a4" stroke-width="0.5" transform="translate(505.8,82.4) rotate(-35)"/><rect x="-1.8" y="-1.8" width="3.6" height="3.6" fill="#8e8e8e" stroke="#a4a4a4" stroke-width="0.5" transform="translate(511.8,76.4) rotate(-32)"/><path d="M507.35,81.47 L510.55,85.57" stroke="#d4d4d4" stroke-width="0.8"/><path d="M513.15,75.41 L516.35,79.5" stroke="#d4d4d4" stroke-width="0.8"/><path d="M405.4,119.8 Q405.2,113.6 412.0,111.2 Q420.4,108.4 421.4,103" fill="none" stroke="#d4d4d4" stroke-width="1"/><rect x="-1.8" y="-1.8" width="3.6" height="3.6" fill="#8e8e8e" stroke="#a4a4a4" stroke-width="0.5" transform="translate(407.2,112) rotate(-32)"/><rect x="-1.8" y="-1.8" width="3.6" height="3.6" fill="#8e8e8e" stroke="#a4a4a4" stroke-width="0.5" transform="translate(406.0,116.6) rotate(8)"/><path d="M430.09999999999997,119.8 Q429.9,113.6 436.7,111.2 Q445.09999999999997,108.4 446.09999999999997,103" fill="none" stroke="#d4d4d4" stroke-width="1"/><rect x="-1.8" y="-1.8" width="3.6" height="3.6" fill="#8e8e8e" stroke="#a4a4a4" stroke-width="0.5" transform="translate(435.09999999999997,109.6) rotate(-22)"/><rect x="-1.8" y="-1.8" width="3.6" height="3.6" fill="#8e8e8e" stroke="#a4a4a4" stroke-width="0.5" transform="translate(439.5,108.2) rotate(-20)"/><path d="M454.59999999999997,119.8 Q454.4,113.6 461.2,111.2 Q469.59999999999997,108.4 470.59999999999997,103" fill="none" stroke="#d4d4d4" stroke-width="1"/><rect x="-1.8" y="-1.8" width="3.6" height="3.6" fill="#8e8e8e" stroke="#a4a4a4" stroke-width="0.5" transform="translate(463.8,108.4) rotate(-30)"/><rect x="-1.8" y="-1.8" width="3.6" height="3.6" fill="#8e8e8e" stroke="#a4a4a4" stroke-width="0.5" transform="translate(467.59999999999997,104) rotate(-8)"/><path d="M478.9,119.8 Q478.7,113.6 485.5,111.2 Q493.9,108.4 494.9,103" fill="none" stroke="#d4d4d4" stroke-width="1"/><rect x="-1.8" y="-1.8" width="3.6" height="3.6" fill="#8e8e8e" stroke="#a4a4a4" stroke-width="0.5" transform="translate(481.1,111) rotate(-30)"/><rect x="-1.8" y="-1.8" width="3.6" height="3.6" fill="#8e8e8e" stroke="#a4a4a4" stroke-width="0.5" transform="translate(489.1,107.6) rotate(-25)"/><path d="M483.5,109.6 L486.9,108.2" stroke="#999" stroke-width="0.7"/><path d="M488.1,113.4 l4,3.3 l-1.9,0.2 l-1.2,1.3Z" fill="#ddd"/></svg>
<div class="sep" style="left:177.0px;top:69px;height:55px;background:#3e3e3e"></div>
<div class="sep" style="left:286.0px;top:69px;height:55px;background:#3e3e3e"></div>
<div class="sep" style="left:394.8px;top:69px;height:55px;background:#3e3e3e"></div>
<svg style="left:0;top:0" width="1100" height="130" viewBox="0 0 1100 130"><circle cx="541.0" cy="76.2" r="6.2" fill="#5a5a5a"/><path d="M538.2,73.4 L543.8,79.0 M543.8,73.4 L538.2,79.0" stroke="#0c0c0c" stroke-width="1.9"/><path d="M535.0,86H547.0M535.0,89.6H547.0" stroke="#4c4c4c" stroke-width="1.2"/><path d="M539.4,100.4 L536.2,103.8 L539.4,107.2 M542.6,100.4 L545.8,103.8 L542.6,107.2" fill="none" stroke="#f0f0f0" stroke-width="1.2"/><rect x="535.7" y="113.6" width="10.6" height="9" rx="2" fill="none" stroke="#8c8c8c" stroke-width="1"/><path d="M538.8,115.5V120.8M541.0,115.5V120.8M543.2,115.5V120.8" stroke="#8c8c8c" stroke-width="1"/></svg>
<div class="t" style="left:575.3px;top:78.3px;font-size:12px">Width</div>
<div class="fld" style="left:613px;top:75.4px;width:59px;height:16.4px;font-size:12px;padding-left:4.5px">1.0 pt</div>
<div class="a" style="left:673px;top:75.4px;width:11.5px;height:16.4px;background:#3c3c3c;border-radius:4px"><svg width="11.5" height="16.4" viewBox="0 0 12 17" style="left:0;top:0"><path d="M3,7 L6,3.7 L9,7 M3,10 L6,13.3 L9,10" fill="none" stroke="#ddd" stroke-width="1.1"/></svg></div>
<div class="a" style="left:686px;top:75.4px;width:12.8px;height:16.4px;background:#3c3c3c;border-radius:4px"></div>
<svg style="left:688.5px;top:81.6px" width="8" height="5" viewBox="0 0 8 5"><path d="M0,0.3H7.6L3.8,4.6Z" fill="#fff"/></svg>
<div class="t" style="left:573.7px;top:102.8px;font-size:12px">Corner</div>
<div class="a" style="left:616.8px;top:97px;width:21.3px;height:20.8px;background:#101010;border-radius:4px"></div>
<svg style="left:0;top:0" width="1100" height="130" viewBox="0 0 1100 130"><clipPath id="cc1"><rect x="621" y="101" width="12.6" height="12.1"/></clipPath><clipPath id="cc2"><rect x="647" y="101" width="12.8" height="12.1"/></clipPath><clipPath id="cc3"><rect x="673" y="101" width="12.9" height="12.1"/></clipPath><g clip-path="url(#cc1)"><path d="M626.0,113.1 V105.5 H633.5" fill="none" stroke="#fff" stroke-width="8" stroke-linejoin="miter"/><path d="M626.0,113.1 V105.5 H633.5" fill="none" stroke="#333" stroke-width="0.8"/><rect x="624.8" y="104.3" width="2.4" height="2.4" fill="#fff" stroke="#222" stroke-width="0.7"/></g><g clip-path="url(#cc2)"><path d="M652.2,113.1 V105.5 H659.7" fill="none" stroke="#fff" stroke-width="8" stroke-linejoin="round"/><path d="M652.2,113.1 V105.5 H659.7" fill="none" stroke="#333" stroke-width="0.8"/><rect x="651" y="104.3" width="2.4" height="2.4" fill="#fff" stroke="#222" stroke-width="0.7"/></g><g clip-path="url(#cc3)"><path d="M678.4000000000001,113.1 V105.5 H685.9000000000001" fill="none" stroke="#fff" stroke-width="8" stroke-linejoin="bevel"/><path d="M678.4000000000001,113.1 V105.5 H685.9000000000001" fill="none" stroke="#333" stroke-width="0.8"/><rect x="677.2" y="104.3" width="2.4" height="2.4" fill="#fff" stroke="#222" stroke-width="0.7"/></g></svg>
<div class="sep" style="left:706.0px;top:69.5px;height:53.5px;background:#3e3e3e"></div>
<div class="a" style="left:714px;top:68px;width:69.3px;height:22.2px;background:#484848;border-radius:7px"></div>
<div class="a" style="left:714px;top:99.2px;width:69.3px;height:22.2px;background:#484848;border-radius:7px"></div>
<div class="a" style="left:740.7px;top:71px;width:17px;height:15.6px;background:#d2d2d2;"></div>
<div class="a" style="left:740px;top:78.3px;width:17.7px;height:1px;background:#222;"></div>
<div class="a" style="left:738.6px;top:77.2px;width:3px;height:3px;background:#0a0a0a;"></div>
<div class="a" style="left:723.4px;top:102.2px;width:17.3px;height:15.8px;background:#d2d2d2;"></div>
<div class="a" style="left:723.4px;top:109.8px;width:18px;height:1px;background:#222;"></div>
<div class="a" style="left:739.6px;top:108.8px;width:3px;height:3px;background:#0a0a0a;"></div>
<svg style="left:766px;top:76.5px" width="12.4" height="6.6" viewBox="0 0 12 7"><path d="M0.7,0.7 L6,6 L11.3,0.7" fill="none" stroke="#f0f0f0" stroke-width="1.5"/></svg>
<svg style="left:766px;top:107.6px" width="12.4" height="6.6" viewBox="0 0 12 7"><path d="M0.7,0.7 L6,6 L11.3,0.7" fill="none" stroke="#f0f0f0" stroke-width="1.5"/></svg>
<div class="sep" style="left:790.5px;top:69.5px;height:53.5px;background:#3e3e3e"></div>
<div class="a" style="left:798.7px;top:68px;width:69.2px;height:22.2px;background:#484848;border-radius:7px"></div>
<div class="a" style="left:803.4px;top:70.4px;width:43.2px;height:17.4px;background:#232323;border-radius:7px"></div>
<div class="a" style="left:820.8px;top:78px;width:24.40000000000009px;height:2px;background:#f2f2f2;"></div>
<svg style="left:851px;top:76.4px" width="12.4" height="6.6" viewBox="0 0 12 7"><path d="M0.7,0.7 L6,6 L11.3,0.7" fill="none" stroke="#f0f0f0" stroke-width="1.5"/></svg>
<div class="a" style="left:798.7px;top:99.2px;width:69.2px;height:22.2px;background:#484848;border-radius:7px"></div>
<div class="a" style="left:803.4px;top:101.60000000000001px;width:43.2px;height:17.4px;background:#232323;border-radius:7px"></div>
<div class="a" style="left:805px;top:109px;width:24px;height:2px;background:#f2f2f2;"></div>
<svg style="left:851px;top:107.60000000000001px" width="12.4" height="6.6" viewBox="0 0 12 7"><path d="M0.7,0.7 L6,6 L11.3,0.7" fill="none" stroke="#f0f0f0" stroke-width="1.5"/></svg>
<div class="sep" style="left:874.8px;top:69.5px;height:53.5px;background:#3e3e3e"></div>
<div class="a" style="left:882.9px;top:70.8px;width:139px;height:22.2px;background:#484848;border-radius:8px"></div>
<div class="a" style="left:888px;top:73.1px;width:112px;height:17.4px;background:#232323;border-radius:8px"></div>
<div class="a" style="left:896.6px;top:79.8px;width:95.4px;height:4px;background:#d8d8d8;"></div>
<svg style="left:1004.4px;top:79.2px" width="12.4" height="6.6" viewBox="0 0 12 7"><path d="M0.7,0.7 L6,6 L11.3,0.7" fill="none" stroke="#f0f0f0" stroke-width="1.5"/></svg>
<div class="a" style="left:1025.8px;top:70.8px;width:22.2px;height:22.2px;background:#484848;border-radius:6px"></div>
<svg style="left:1025.8px;top:70.8px" width="22" height="22" viewBox="0 0 22 22"><path d="M3.8,5.5H18.4" stroke="#e6e6e6" stroke-width="1"/><circle cx="7.5" cy="5.5" r="1.7" fill="#484848" stroke="#e6e6e6" stroke-width="0.9"/><path d="M3.8,10.8H18.4" stroke="#e6e6e6" stroke-width="1"/><circle cx="15" cy="10.8" r="1.7" fill="#484848" stroke="#e6e6e6" stroke-width="0.9"/><path d="M3.8,16H18.4" stroke="#e6e6e6" stroke-width="1"/><circle cx="9.8" cy="16" r="1.7" fill="#484848" stroke="#e6e6e6" stroke-width="0.9"/></svg>
<div class="a" style="left:882.9px;top:100px;width:139px;height:22.2px;background:#484848;border-radius:8px"></div>
<div class="a" style="left:888px;top:102.3px;width:112px;height:17.4px;background:#232323;border-radius:8px"></div>
<div class="a" style="left:896.6px;top:106px;width:95.4px;height:10.2px;background:#d8d8d8;"></div>
<svg style="left:1004.4px;top:108.4px" width="12.4" height="6.6" viewBox="0 0 12 7"><path d="M0.7,0.7 L6,6 L11.3,0.7" fill="none" stroke="#f0f0f0" stroke-width="1.5"/></svg>
<div class="a" style="left:1025.8px;top:100px;width:22.2px;height:22.2px;background:#484848;border-radius:6px"></div>
<svg style="left:1025.8px;top:100px" width="22" height="22" viewBox="0 0 22 22"><path d="M3.8,5.5H18.4" stroke="#e6e6e6" stroke-width="1"/><circle cx="7.5" cy="5.5" r="1.7" fill="#484848" stroke="#e6e6e6" stroke-width="0.9"/><path d="M3.8,10.8H18.4" stroke="#e6e6e6" stroke-width="1"/><circle cx="15" cy="10.8" r="1.7" fill="#484848" stroke="#e6e6e6" stroke-width="0.9"/><path d="M3.8,16H18.4" stroke="#e6e6e6" stroke-width="1"/><circle cx="9.8" cy="16" r="1.7" fill="#484848" stroke="#e6e6e6" stroke-width="0.9"/></svg>
<div class="a" style="left:48.3px;top:131.2px;width:256.4px;height:21px;background:#262626;border-radius:8px 8px 0 0;border-top:1px solid #343434"></div>
<div class="a" style="left:48px;top:151.5px;width:1494.8px;height:810px;background:#262626;border-radius:0 9px 0 0"></div>
<div class="a" style="left:304px;top:151px;width:1221px;height:1px;background:#565656;"></div>
<svg style="left:51px;top:134.5px" width="14" height="14" viewBox="0 0 14 14"><circle cx="7.2" cy="7.2" r="6" fill="#5a5a5a"/><path d="M4.5,4.5L9.9,9.9M9.9,4.5L4.5,9.9" stroke="#0c0c0c" stroke-width="1.9"/></svg>
<div class="t" style="left:68.8px;top:135.6px;">Untitled–1 [RGB] [@52.8%] – [Modified]</div>
<div class="a" style="left:67.3px;top:171px;width:1461.7px;height:789px;background:#424242;"></div>
<svg style="left:0;top:0" width="1529" height="172" viewBox="0 0 1529 172"><clipPath id="hr"><rect x="71" y="152" width="1458" height="20"/></clipPath><g clip-path="url(#hr)"><path d="M72.2,165.2V171" stroke="#c4c4c4" stroke-width="1"/><path d="M76.6,165.2V171" stroke="#c4c4c4" stroke-width="1"/><path d="M81.0,165.2V171" stroke="#c4c4c4" stroke-width="1"/><path d="M85.4,160.6V171" stroke="#c4c4c4" stroke-width="1"/><path d="M89.8,165.2V171" stroke="#c4c4c4" stroke-width="1"/><path d="M94.2,165.2V171" stroke="#c4c4c4" stroke-width="1"/><path d="M98.6,165.2V171" stroke="#c4c4c4" stroke-width="1"/><path d="M103.0,165.2V171" stroke="#c4c4c4" stroke-width="1"/><path d="M107.4,155.6V171" stroke="#c4c4c4" stroke-width="1"/><path d="M111.8,165.2V171" stroke="#c4c4c4" stroke-width="1"/><path d="M116.2,165.2V171" stroke="#c4c4c4" stroke-width="1"/><path d="M120.6,165.2V171" stroke="#c4c4c4" stroke-width="1"/><path d="M125.0,165.2V171" stroke="#c4c4c4" stroke-width="1"/><path d="M129.4,160.6V171" stroke="#c4c4c4" stroke-width="1"/><path d="M133.8,165.2V171" stroke="#c4c4c4" stroke-width="1"/><path d="M138.2,165.2V171" stroke="#c4c4c4" stroke-width="1"/><path d="M142.6,165.2V171" stroke="#c4c4c4" stroke-width="1"/><path d="M147.0,165.2V171" stroke="#c4c4c4" stroke-width="1"/><path d="M151.4,155.6V171" stroke="#c4c4c4" stroke-width="1"/><path d="M155.8,165.2V171" stroke="#c4c4c4" stroke-width="1"/><path d="M160.2,165.2V171" stroke="#c4c4c4" stroke-width="1"/><path d="M164.6,165.2V171" stroke="#c4c4c4" stroke-width="1"/><path d="M169.0,165.2V171" stroke="#c4c4c4" stroke-width="1"/><path d="M173.4,160.6V171" stroke="#c4c4c4" stroke-width="1"/><path d="M177.8,165.2V171" stroke="#c4c4c4" stroke-width="1"/><path d="M182.2,165.2V171" stroke="#c4c4c4" stroke-width="1"/><path d="M186.6,165.2V171" stroke="#c4c4c4" stroke-width="1"/><path d="M191.0,165.2V171" stroke="#c4c4c4" stroke-width="1"/><path d="M195.4,155.6V171" stroke="#c4c4c4" stroke-width="1"/><path d="M199.8,165.2V171" stroke="#c4c4c4" stroke-width="1"/><path d="M204.2,165.2V171" stroke="#c4c4c4" stroke-width="1"/><path d="M208.6,165.2V171" stroke="#c4c4c4" stroke-width="1"/><path d="M213.0,165.2V171" stroke="#c4c4c4" stroke-width="1"/><path d="M217.4,160.6V171" stroke="#c4c4c4" stroke-width="1"/><path d="M221.8,165.2V171" stroke="#c4c4c4" stroke-width="1"/><path d="M226.2,165.2V171" stroke="#c4c4c4" stroke-width="1"/><path d="M230.6,165.2V171" stroke="#c4c4c4" stroke-width="1"/><path d="M235.0,165.2V171" stroke="#c4c4c4" stroke-width="1"/><path d="M239.4,155.6V171" stroke="#c4c4c4" stroke-width="1"/><path d="M243.8,165.2V171" stroke="#c4c4c4" stroke-width="1"/><path d="M248.2,165.2V171" stroke="#c4c4c4" stroke-width="1"/><path d="M252.6,165.2V171" stroke="#c4c4c4" stroke-width="1"/><path d="M257.0,165.2V171" stroke="#c4c4c4" stroke-width="1"/><path d="M261.4,160.6V171" stroke="#c4c4c4" stroke-width="1"/><path d="M265.8,165.2V171" stroke="#c4c4c4" stroke-width="1"/><path d="M270.2,165.2V171" stroke="#c4c4c4" stroke-width="1"/><path d="M274.6,165.2V171" stroke="#c4c4c4" stroke-width="1"/><path d="M279.0,165.2V171" stroke="#c4c4c4" stroke-width="1"/><path d="M283.4,155.6V171" stroke="#c4c4c4" stroke-width="1"/><path d="M287.8,165.2V171" stroke="#c4c4c4" stroke-width="1"/><path d="M292.2,165.2V171" stroke="#c4c4c4" stroke-width="1"/><path d="M296.6,165.2V171" stroke="#c4c4c4" stroke-width="1"/><path d="M301.0,165.2V171" stroke="#c4c4c4" stroke-width="1"/><path d="M305.4,160.6V171" stroke="#c4c4c4" stroke-width="1"/><path d="M309.8,165.2V171" stroke="#c4c4c4" stroke-width="1"/><path d="M314.2,165.2V171" stroke="#c4c4c4" stroke-width="1"/><path d="M318.6,165.2V171" stroke="#c4c4c4" stroke-width="1"/><path d="M323.0,165.2V171" stroke="#c4c4c4" stroke-width="1"/><path d="M327.4,155.6V171" stroke="#c4c4c4" stroke-width="1"/><path d="M331.8,165.2V171" stroke="#c4c4c4" stroke-width="1"/><path d="M336.2,165.2V171" stroke="#c4c4c4" stroke-width="1"/><path d="M340.6,165.2V171" stroke="#c4c4c4" stroke-width="1"/><path d="M345.0,165.2V171" stroke="#c4c4c4" stroke-width="1"/><path d="M349.4,160.6V171" stroke="#c4c4c4" stroke-width="1"/><path d="M353.8,165.2V171" stroke="#c4c4c4" stroke-width="1"/><path d="M358.2,165.2V171" stroke="#c4c4c4" stroke-width="1"/><path d="M362.6,165.2V171" stroke="#c4c4c4" stroke-width="1"/><path d="M367.0,165.2V171" stroke="#c4c4c4" stroke-width="1"/><path d="M371.4,155.6V171" stroke="#c4c4c4" stroke-width="1"/><path d="M375.8,165.2V171" stroke="#c4c4c4" stroke-width="1"/><path d="M380.2,165.2V171" stroke="#c4c4c4" stroke-width="1"/><path d="M384.6,165.2V171" stroke="#c4c4c4" stroke-width="1"/><path d="M389.0,165.2V171" stroke="#c4c4c4" stroke-width="1"/><path d="M393.4,160.6V171" stroke="#c4c4c4" stroke-width="1"/><path d="M397.8,165.2V171" stroke="#c4c4c4" stroke-width="1"/><path d="M402.2,165.2V171" stroke="#c4c4c4" stroke-width="1"/><path d="M406.6,165.2V171" stroke="#c4c4c4" stroke-width="1"/><path d="M411.0,165.2V171" stroke="#c4c4c4" stroke-width="1"/><path d="M415.4,155.6V171" stroke="#c4c4c4" stroke-width="1"/><path d="M419.8,165.2V171" stroke="#c4c4c4" stroke-width="1"/><path d="M424.2,165.2V171" stroke="#c4c4c4" stroke-width="1"/><path d="M428.6,165.2V171" stroke="#c4c4c4" stroke-width="1"/><path d="M433.0,165.2V171" stroke="#c4c4c4" stroke-width="1"/><path d="M437.4,160.6V171" stroke="#c4c4c4" stroke-width="1"/><path d="M441.8,165.2V171" stroke="#c4c4c4" stroke-width="1"/><path d="M446.2,165.2V171" stroke="#c4c4c4" stroke-width="1"/><path d="M450.6,165.2V171" stroke="#c4c4c4" stroke-width="1"/><path d="M455.0,165.2V171" stroke="#c4c4c4" stroke-width="1"/><path d="M459.4,155.6V171" stroke="#c4c4c4" stroke-width="1"/><path d="M463.8,165.2V171" stroke="#c4c4c4" stroke-width="1"/><path d="M468.2,165.2V171" stroke="#c4c4c4" stroke-width="1"/><path d="M472.6,165.2V171" stroke="#c4c4c4" stroke-width="1"/><path d="M477.0,165.2V171" stroke="#c4c4c4" stroke-width="1"/><path d="M481.4,160.6V171" stroke="#c4c4c4" stroke-width="1"/><path d="M485.8,165.2V171" stroke="#c4c4c4" stroke-width="1"/><path d="M490.2,165.2V171" stroke="#c4c4c4" stroke-width="1"/><path d="M494.6,165.2V171" stroke="#c4c4c4" stroke-width="1"/><path d="M499.0,165.2V171" stroke="#c4c4c4" stroke-width="1"/><path d="M503.4,155.6V171" stroke="#c4c4c4" stroke-width="1"/><path d="M507.8,165.2V171" stroke="#c4c4c4" stroke-width="1"/><path d="M512.2,165.2V171" stroke="#c4c4c4" stroke-width="1"/><path d="M516.6,165.2V171" stroke="#c4c4c4" stroke-width="1"/><path d="M521.0,165.2V171" stroke="#c4c4c4" stroke-width="1"/><path d="M525.4,160.6V171" stroke="#c4c4c4" stroke-width="1"/><path d="M529.8,165.2V171" stroke="#c4c4c4" stroke-width="1"/><path d="M534.2,165.2V171" stroke="#c4c4c4" stroke-width="1"/><path d="M538.6,165.2V171" stroke="#c4c4c4" stroke-width="1"/><path d="M543.0,165.2V171" stroke="#c4c4c4" stroke-width="1"/><path d="M547.4,155.6V171" stroke="#c4c4c4" stroke-width="1"/><path d="M551.8,165.2V171" stroke="#c4c4c4" stroke-width="1"/><path d="M556.2,165.2V171" stroke="#c4c4c4" stroke-width="1"/><path d="M560.6,165.2V171" stroke="#c4c4c4" stroke-width="1"/><path d="M565.0,165.2V171" stroke="#c4c4c4" stroke-width="1"/><path d="M569.4,160.6V171" stroke="#c4c4c4" stroke-width="1"/><path d="M573.8,165.2V171" stroke="#c4c4c4" stroke-width="1"/><path d="M578.2,165.2V171" stroke="#c4c4c4" stroke-width="1"/><path d="M582.6,165.2V171" stroke="#c4c4c4" stroke-width="1"/><path d="M587.0,165.2V171" stroke="#c4c4c4" stroke-width="1"/><path d="M591.4,155.6V171" stroke="#c4c4c4" stroke-width="1"/><path d="M595.8,165.2V171" stroke="#c4c4c4" stroke-width="1"/><path d="M600.2,165.2V171" stroke="#c4c4c4" stroke-width="1"/><path d="M604.6,165.2V171" stroke="#c4c4c4" stroke-width="1"/><path d="M609.0,165.2V171" stroke="#c4c4c4" stroke-width="1"/><path d="M613.4,160.6V171" stroke="#c4c4c4" stroke-width="1"/><path d="M617.8,165.2V171" stroke="#c4c4c4" stroke-width="1"/><path d="M622.2,165.2V171" stroke="#c4c4c4" stroke-width="1"/><path d="M626.6,165.2V171" stroke="#c4c4c4" stroke-width="1"/><path d="M631.0,165.2V171" stroke="#c4c4c4" stroke-width="1"/><path d="M635.4,155.6V171" stroke="#c4c4c4" stroke-width="1"/><path d="M639.8,165.2V171" stroke="#c4c4c4" stroke-width="1"/><path d="M644.2,165.2V171" stroke="#c4c4c4" stroke-width="1"/><path d="M648.6,165.2V171" stroke="#c4c4c4" stroke-width="1"/><path d="M653.0,165.2V171" stroke="#c4c4c4" stroke-width="1"/><path d="M657.4,160.6V171" stroke="#c4c4c4" stroke-width="1"/><path d="M661.8,165.2V171" stroke="#c4c4c4" stroke-width="1"/><path d="M666.2,165.2V171" stroke="#c4c4c4" stroke-width="1"/><path d="M670.6,165.2V171" stroke="#c4c4c4" stroke-width="1"/><path d="M675.0,165.2V171" stroke="#c4c4c4" stroke-width="1"/><path d="M679.4,155.6V171" stroke="#c4c4c4" stroke-width="1"/><path d="M683.8,165.2V171" stroke="#c4c4c4" stroke-width="1"/><path d="M688.2,165.2V171" stroke="#c4c4c4" stroke-width="1"/><path d="M692.6,165.2V171" stroke="#c4c4c4" stroke-width="1"/><path d="M697.0,165.2V171" stroke="#c4c4c4" stroke-width="1"/><path d="M701.4,160.6V171" stroke="#c4c4c4" stroke-width="1"/><path d="M705.8,165.2V171" stroke="#c4c4c4" stroke-width="1"/><path d="M710.2,165.2V171" stroke="#c4c4c4" stroke-width="1"/><path d="M714.6,165.2V171" stroke="#c4c4c4" stroke-width="1"/><path d="M719.0,165.2V171" stroke="#c4c4c4" stroke-width="1"/><path d="M723.4,155.6V171" stroke="#c4c4c4" stroke-width="1"/><path d="M727.8,165.2V171" stroke="#c4c4c4" stroke-width="1"/><path d="M732.2,165.2V171" stroke="#c4c4c4" stroke-width="1"/><path d="M736.6,165.2V171" stroke="#c4c4c4" stroke-width="1"/><path d="M741.0,165.2V171" stroke="#c4c4c4" stroke-width="1"/><path d="M745.4,160.6V171" stroke="#c4c4c4" stroke-width="1"/><path d="M749.8,165.2V171" stroke="#c4c4c4" stroke-width="1"/><path d="M754.2,165.2V171" stroke="#c4c4c4" stroke-width="1"/><path d="M758.6,165.2V171" stroke="#c4c4c4" stroke-width="1"/><path d="M763.0,165.2V171" stroke="#c4c4c4" stroke-width="1"/><path d="M767.4,155.6V171" stroke="#c4c4c4" stroke-width="1"/><path d="M771.8,165.2V171" stroke="#c4c4c4" stroke-width="1"/><path d="M776.2,165.2V171" stroke="#c4c4c4" stroke-width="1"/><path d="M780.6,165.2V171" stroke="#c4c4c4" stroke-width="1"/><path d="M785.0,165.2V171" stroke="#c4c4c4" stroke-width="1"/><path d="M789.4,160.6V171" stroke="#c4c4c4" stroke-width="1"/><path d="M793.8,165.2V171" stroke="#c4c4c4" stroke-width="1"/><path d="M798.2,165.2V171" stroke="#c4c4c4" stroke-width="1"/><path d="M802.6,165.2V171" stroke="#c4c4c4" stroke-width="1"/><path d="M807.0,165.2V171" stroke="#c4c4c4" stroke-width="1"/><path d="M811.4,155.6V171" stroke="#c4c4c4" stroke-width="1"/><path d="M815.8,165.2V171" stroke="#c4c4c4" stroke-width="1"/><path d="M820.2,165.2V171" stroke="#c4c4c4" stroke-width="1"/><path d="M824.6,165.2V171" stroke="#c4c4c4" stroke-width="1"/><path d="M829.0,165.2V171" stroke="#c4c4c4" stroke-width="1"/><path d="M833.4,160.6V171" stroke="#c4c4c4" stroke-width="1"/><path d="M837.8,165.2V171" stroke="#c4c4c4" stroke-width="1"/><path d="M842.2,165.2V171" stroke="#c4c4c4" stroke-width="1"/><path d="M846.6,165.2V171" stroke="#c4c4c4" stroke-width="1"/><path d="M851.0,165.2V171" stroke="#c4c4c4" stroke-width="1"/><path d="M855.4,155.6V171" stroke="#c4c4c4" stroke-width="1"/><path d="M859.8,165.2V171" stroke="#c4c4c4" stroke-width="1"/><path d="M864.2,165.2V171" stroke="#c4c4c4" stroke-width="1"/><path d="M868.6,165.2V171" stroke="#c4c4c4" stroke-width="1"/><path d="M873.0,165.2V171" stroke="#c4c4c4" stroke-width="1"/><path d="M877.4,160.6V171" stroke="#c4c4c4" stroke-width="1"/><path d="M881.8,165.2V171" stroke="#c4c4c4" stroke-width="1"/><path d="M886.2,165.2V171" stroke="#c4c4c4" stroke-width="1"/><path d="M890.6,165.2V171" stroke="#c4c4c4" stroke-width="1"/><path d="M895.0,165.2V171" stroke="#c4c4c4" stroke-width="1"/><path d="M899.4,155.6V171" stroke="#c4c4c4" stroke-width="1"/><path d="M903.8,165.2V171" stroke="#c4c4c4" stroke-width="1"/><path d="M908.2,165.2V171" stroke="#c4c4c4" stroke-width="1"/><path d="M912.6,165.2V171" stroke="#c4c4c4" stroke-width="1"/><path d="M917.0,165.2V171" stroke="#c4c4c4" stroke-width="1"/><path d="M921.4,160.6V171" stroke="#c4c4c4" stroke-width="1"/><path d="M925.8,165.2V171" stroke="#c4c4c4" stroke-width="1"/><path d="M930.2,165.2V171" stroke="#c4c4c4" stroke-width="1"/><path d="M934.6,165.2V171" stroke="#c4c4c4" stroke-width="1"/><path d="M939.0,165.2V171" stroke="#c4c4c4" stroke-width="1"/><path d="M943.4,155.6V171" stroke="#c4c4c4" stroke-width="1"/><path d="M947.8,165.2V171" stroke="#c4c4c4" stroke-width="1"/><path d="M952.2,165.2V171" stroke="#c4c4c4" stroke-width="1"/><path d="M956.6,165.2V171" stroke="#c4c4c4" stroke-width="1"/><path d="M961.0,165.2V171" stroke="#c4c4c4" stroke-width="1"/><path d="M965.4,160.6V171" stroke="#c4c4c4" stroke-width="1"/><path d="M969.8,165.2V171" stroke="#c4c4c4" stroke-width="1"/><path d="M974.2,165.2V171" stroke="#c4c4c4" stroke-width="1"/><path d="M978.6,165.2V171" stroke="#c4c4c4" stroke-width="1"/><path d="M983.0,165.2V171" stroke="#c4c4c4" stroke-width="1"/><path d="M987.4,155.6V171" stroke="#c4c4c4" stroke-width="1"/><path d="M991.8,165.2V171" stroke="#c4c4c4" stroke-width="1"/><path d="M996.2,165.2V171" stroke="#c4c4c4" stroke-width="1"/><path d="M1000.6,165.2V171" stroke="#c4c4c4" stroke-width="1"/><path d="M1005.0,165.2V171" stroke="#c4c4c4" stroke-width="1"/><path d="M1009.4,160.6V171" stroke="#c4c4c4" stroke-width="1"/><path d="M1013.8,165.2V171" stroke="#c4c4c4" stroke-width="1"/><path d="M1018.2,165.2V171" stroke="#c4c4c4" stroke-width="1"/><path d="M1022.6,165.2V171" stroke="#c4c4c4" stroke-width="1"/><path d="M1027.0,165.2V171" stroke="#c4c4c4" stroke-width="1"/><path d="M1031.4,155.6V171" stroke="#c4c4c4" stroke-width="1"/><path d="M1035.8,165.2V171" stroke="#c4c4c4" stroke-width="1"/><path d="M1040.2,165.2V171" stroke="#c4c4c4" stroke-width="1"/><path d="M1044.6,165.2V171" stroke="#c4c4c4" stroke-width="1"/><path d="M1049.0,165.2V171" stroke="#c4c4c4" stroke-width="1"/><path d="M1053.4,160.6V171" stroke="#c4c4c4" stroke-width="1"/><path d="M1057.8,165.2V171" stroke="#c4c4c4" stroke-width="1"/><path d="M1062.2,165.2V171" stroke="#c4c4c4" stroke-width="1"/><path d="M1066.6,165.2V171" stroke="#c4c4c4" stroke-width="1"/><path d="M1071.0,165.2V171" stroke="#c4c4c4" stroke-width="1"/><path d="M1075.4,155.6V171" stroke="#c4c4c4" stroke-width="1"/><path d="M1079.8,165.2V171" stroke="#c4c4c4" stroke-width="1"/><path d="M1084.2,165.2V171" stroke="#c4c4c4" stroke-width="1"/><path d="M1088.6,165.2V171" stroke="#c4c4c4" stroke-width="1"/><path d="M1093.0,165.2V171" stroke="#c4c4c4" stroke-width="1"/><path d="M1097.4,160.6V171" stroke="#c4c4c4" stroke-width="1"/><path d="M1101.8,165.2V171" stroke="#c4c4c4" stroke-width="1"/><path d="M1106.2,165.2V171" stroke="#c4c4c4" stroke-width="1"/><path d="M1110.6,165.2V171" stroke="#c4c4c4" stroke-width="1"/><path d="M1115.0,165.2V171" stroke="#c4c4c4" stroke-width="1"/><path d="M1119.4,155.6V171" stroke="#c4c4c4" stroke-width="1"/><path d="M1123.8,165.2V171" stroke="#c4c4c4" stroke-width="1"/><path d="M1128.2,165.2V171" stroke="#c4c4c4" stroke-width="1"/><path d="M1132.6,165.2V171" stroke="#c4c4c4" stroke-width="1"/><path d="M1137.0,165.2V171" stroke="#c4c4c4" stroke-width="1"/><path d="M1141.4,160.6V171" stroke="#c4c4c4" stroke-width="1"/><path d="M1145.8,165.2V171" stroke="#c4c4c4" stroke-width="1"/><path d="M1150.2,165.2V171" stroke="#c4c4c4" stroke-width="1"/><path d="M1154.6,165.2V171" stroke="#c4c4c4" stroke-width="1"/><path d="M1159.0,165.2V171" stroke="#c4c4c4" stroke-width="1"/><path d="M1163.4,155.6V171" stroke="#c4c4c4" stroke-width="1"/><path d="M1167.8,165.2V171" stroke="#c4c4c4" stroke-width="1"/><path d="M1172.2,165.2V171" stroke="#c4c4c4" stroke-width="1"/><path d="M1176.6,165.2V171" stroke="#c4c4c4" stroke-width="1"/><path d="M1181.0,165.2V171" stroke="#c4c4c4" stroke-width="1"/><path d="M1185.4,160.6V171" stroke="#c4c4c4" stroke-width="1"/><path d="M1189.8,165.2V171" stroke="#c4c4c4" stroke-width="1"/><path d="M1194.2,165.2V171" stroke="#c4c4c4" stroke-width="1"/><path d="M1198.6,165.2V171" stroke="#c4c4c4" stroke-width="1"/><path d="M1203.0,165.2V171" stroke="#c4c4c4" stroke-width="1"/><path d="M1207.4,155.6V171" stroke="#c4c4c4" stroke-width="1"/><path d="M1211.8,165.2V171" stroke="#c4c4c4" stroke-width="1"/><path d="M1216.2,165.2V171" stroke="#c4c4c4" stroke-width="1"/><path d="M1220.6,165.2V171" stroke="#c4c4c4" stroke-width="1"/><path d="M1225.0,165.2V171" stroke="#c4c4c4" stroke-width="1"/><path d="M1229.4,160.6V171" stroke="#c4c4c4" stroke-width="1"/><path d="M1233.8,165.2V171" stroke="#c4c4c4" stroke-width="1"/><path d="M1238.2,165.2V171" stroke="#c4c4c4" stroke-width="1"/><path d="M1242.6,165.2V171" stroke="#c4c4c4" stroke-width="1"/><path d="M1247.0,165.2V171" stroke="#c4c4c4" stroke-width="1"/><path d="M1251.4,155.6V171" stroke="#c4c4c4" stroke-width="1"/><path d="M1255.8,165.2V171" stroke="#c4c4c4" stroke-width="1"/><path d="M1260.2,165.2V171" stroke="#c4c4c4" stroke-width="1"/><path d="M1264.6,165.2V171" stroke="#c4c4c4" stroke-width="1"/><path d="M1269.0,165.2V171" stroke="#c4c4c4" stroke-width="1"/><path d="M1273.4,160.6V171" stroke="#c4c4c4" stroke-width="1"/><path d="M1277.8,165.2V171" stroke="#c4c4c4" stroke-width="1"/><path d="M1282.2,165.2V171" stroke="#c4c4c4" stroke-width="1"/><path d="M1286.6,165.2V171" stroke="#c4c4c4" stroke-width="1"/><path d="M1291.0,165.2V171" stroke="#c4c4c4" stroke-width="1"/><path d="M1295.4,155.6V171" stroke="#c4c4c4" stroke-width="1"/><path d="M1299.8,165.2V171" stroke="#c4c4c4" stroke-width="1"/><path d="M1304.2,165.2V171" stroke="#c4c4c4" stroke-width="1"/><path d="M1308.6,165.2V171" stroke="#c4c4c4" stroke-width="1"/><path d="M1313.0,165.2V171" stroke="#c4c4c4" stroke-width="1"/><path d="M1317.4,160.6V171" stroke="#c4c4c4" stroke-width="1"/><path d="M1321.8,165.2V171" stroke="#c4c4c4" stroke-width="1"/><path d="M1326.2,165.2V171" stroke="#c4c4c4" stroke-width="1"/><path d="M1330.6,165.2V171" stroke="#c4c4c4" stroke-width="1"/><path d="M1335.0,165.2V171" stroke="#c4c4c4" stroke-width="1"/><path d="M1339.4,155.6V171" stroke="#c4c4c4" stroke-width="1"/><path d="M1343.8,165.2V171" stroke="#c4c4c4" stroke-width="1"/><path d="M1348.2,165.2V171" stroke="#c4c4c4" stroke-width="1"/><path d="M1352.6,165.2V171" stroke="#c4c4c4" stroke-width="1"/><path d="M1357.0,165.2V171" stroke="#c4c4c4" stroke-width="1"/><path d="M1361.4,160.6V171" stroke="#c4c4c4" stroke-width="1"/><path d="M1365.8,165.2V171" stroke="#c4c4c4" stroke-width="1"/><path d="M1370.2,165.2V171" stroke="#c4c4c4" stroke-width="1"/><path d="M1374.6,165.2V171" stroke="#c4c4c4" stroke-width="1"/><path d="M1379.0,165.2V171" stroke="#c4c4c4" stroke-width="1"/><path d="M1383.4,155.6V171" stroke="#c4c4c4" stroke-width="1"/><path d="M1387.8,165.2V171" stroke="#c4c4c4" stroke-width="1"/><path d="M1392.2,165.2V171" stroke="#c4c4c4" stroke-width="1"/><path d="M1396.6,165.2V171" stroke="#c4c4c4" stroke-width="1"/><path d="M1401.0,165.2V171" stroke="#c4c4c4" stroke-width="1"/><path d="M1405.4,160.6V171" stroke="#c4c4c4" stroke-width="1"/><path d="M1409.8,165.2V171" stroke="#c4c4c4" stroke-width="1"/><path d="M1414.2,165.2V171" stroke="#c4c4c4" stroke-width="1"/><path d="M1418.6,165.2V171" stroke="#c4c4c4" stroke-width="1"/><path d="M1423.0,165.2V171" stroke="#c4c4c4" stroke-width="1"/><path d="M1427.4,155.6V171" stroke="#c4c4c4" stroke-width="1"/><path d="M1431.8,165.2V171" stroke="#c4c4c4" stroke-width="1"/><path d="M1436.2,165.2V171" stroke="#c4c4c4" stroke-width="1"/><path d="M1440.6,165.2V171" stroke="#c4c4c4" stroke-width="1"/><path d="M1445.0,165.2V171" stroke="#c4c4c4" stroke-width="1"/><path d="M1449.4,160.6V171" stroke="#c4c4c4" stroke-width="1"/><path d="M1453.8,165.2V171" stroke="#c4c4c4" stroke-width="1"/><path d="M1458.2,165.2V171" stroke="#c4c4c4" stroke-width="1"/><path d="M1462.6,165.2V171" stroke="#c4c4c4" stroke-width="1"/><path d="M1467.0,165.2V171" stroke="#c4c4c4" stroke-width="1"/><path d="M1471.4,155.6V171" stroke="#c4c4c4" stroke-width="1"/><path d="M1475.8,165.2V171" stroke="#c4c4c4" stroke-width="1"/><path d="M1480.2,165.2V171" stroke="#c4c4c4" stroke-width="1"/><path d="M1484.6,165.2V171" stroke="#c4c4c4" stroke-width="1"/><path d="M1489.0,165.2V171" stroke="#c4c4c4" stroke-width="1"/><path d="M1493.4,160.6V171" stroke="#c4c4c4" stroke-width="1"/><path d="M1497.8,165.2V171" stroke="#c4c4c4" stroke-width="1"/><path d="M1502.2,165.2V171" stroke="#c4c4c4" stroke-width="1"/><path d="M1506.6,165.2V171" stroke="#c4c4c4" stroke-width="1"/><path d="M1511.0,165.2V171" stroke="#c4c4c4" stroke-width="1"/><path d="M1515.4,155.6V171" stroke="#c4c4c4" stroke-width="1"/><path d="M1519.8,165.2V171" stroke="#c4c4c4" stroke-width="1"/><g font-family="Liberation Sans, DejaVu Sans, sans-serif" font-size="12" fill="#fff" stroke="#fff" stroke-width=".45"><text x="64.6" y="164">–400</text><text x="108.6" y="164">–350</text><text x="152.6" y="164">–300</text><text x="196.6" y="164">–250</text><text x="240.6" y="164">–200</text><text x="284.6" y="164">–150</text><text x="328.6" y="164">–100</text><text x="372.6" y="164">–50</text><text x="416.6" y="164">0</text><text x="460.6" y="164">50</text><text x="504.6" y="164">100</text><text x="548.6" y="164">150</text><text x="592.6" y="164">200</text><text x="636.6" y="164">250</text><text x="680.6" y="164">300</text><text x="724.6" y="164">350</text><text x="768.6" y="164">400</text><text x="812.6" y="164">450</text><text x="856.6" y="164">500</text><text x="900.6" y="164">550</text><text x="944.6" y="164">600</text><text x="988.6" y="164">650</text><text x="1032.6" y="164">700</text><text x="1076.6" y="164">750</text><text x="1120.6" y="164">800</text><text x="1164.6" y="164">850</text><text x="1208.6" y="164">900</text><text x="1252.6" y="164">950</text><text x="1296.6" y="164">1000</text><text x="1340.6" y="164">1050</text><text x="1384.6" y="164">1100</text><text x="1428.6" y="164">1150</text><text x="1472.6" y="164">1200</text><text x="1516.6" y="164">1250</text></g></g></svg>
<svg style="left:0;top:0" width="68" height="960" viewBox="0 0 68 960"><clipPath id="vr"><rect x="48" y="174" width="20" height="786"/></clipPath><g clip-path="url(#vr)"><path d="M61,959.9H67.3" stroke="#c4c4c4" stroke-width="1"/><path d="M61,955.5H67.3" stroke="#c4c4c4" stroke-width="1"/><path d="M61,951.1H67.3" stroke="#c4c4c4" stroke-width="1"/><path d="M51,946.7H67.3" stroke="#c4c4c4" stroke-width="1"/><path d="M61,942.3H67.3" stroke="#c4c4c4" stroke-width="1"/><path d="M61,937.9H67.3" stroke="#c4c4c4" stroke-width="1"/><path d="M61,933.5H67.3" stroke="#c4c4c4" stroke-width="1"/><path d="M61,929.1H67.3" stroke="#c4c4c4" stroke-width="1"/><path d="M56,924.7H67.3" stroke="#c4c4c4" stroke-width="1"/><path d="M61,920.3H67.3" stroke="#c4c4c4" stroke-width="1"/><path d="M61,915.9H67.3" stroke="#c4c4c4" stroke-width="1"/><path d="M61,911.5H67.3" stroke="#c4c4c4" stroke-width="1"/><path d="M61,907.1H67.3" stroke="#c4c4c4" stroke-width="1"/><path d="M51,902.7H67.3" stroke="#c4c4c4" stroke-width="1"/><path d="M61,898.3H67.3" stroke="#c4c4c4" stroke-width="1"/><path d="M61,893.9H67.3" stroke="#c4c4c4" stroke-width="1"/><path d="M61,889.5H67.3" stroke="#c4c4c4" stroke-width="1"/><path d="M61,885.1H67.3" stroke="#c4c4c4" stroke-width="1"/><path d="M56,880.7H67.3" stroke="#c4c4c4" stroke-width="1"/><path d="M61,876.3H67.3" stroke="#c4c4c4" stroke-width="1"/><path d="M61,871.9H67.3" stroke="#c4c4c4" stroke-width="1"/><path d="M61,867.5H67.3" stroke="#c4c4c4" stroke-width="1"/><path d="M61,863.1H67.3" stroke="#c4c4c4" stroke-width="1"/><path d="M51,858.7H67.3" stroke="#c4c4c4" stroke-width="1"/><path d="M61,854.3H67.3" stroke="#c4c4c4" stroke-width="1"/><path d="M61,849.9H67.3" stroke="#c4c4c4" stroke-width="1"/><path d="M61,845.5H67.3" stroke="#c4c4c4" stroke-width="1"/><path d="M61,841.1H67.3" stroke="#c4c4c4" stroke-width="1"/><path d="M56,836.7H67.3" stroke="#c4c4c4" stroke-width="1"/><path d="M61,832.3H67.3" stroke="#c4c4c4" stroke-width="1"/><path d="M61,827.9H67.3" stroke="#c4c4c4" stroke-width="1"/><path d="M61,823.5H67.3" stroke="#c4c4c4" stroke-width="1"/><path d="M61,819.1H67.3" stroke="#c4c4c4" stroke-width="1"/><path d="M51,814.7H67.3" stroke="#c4c4c4" stroke-width="1"/><path d="M61,810.3H67.3" stroke="#c4c4c4" stroke-width="1"/><path d="M61,805.9H67.3" stroke="#c4c4c4" stroke-width="1"/><path d="M61,801.5H67.3" stroke="#c4c4c4" stroke-width="1"/><path d="M61,797.1H67.3" stroke="#c4c4c4" stroke-width="1"/><path d="M56,792.7H67.3" stroke="#c4c4c4" stroke-width="1"/><path d="M61,788.3H67.3" stroke="#c4c4c4" stroke-width="1"/><path d="M61,783.9H67.3" stroke="#c4c4c4" stroke-width="1"/><path d="M61,779.5H67.3" stroke="#c4c4c4" stroke-width="1"/><path d="M61,775.1H67.3" stroke="#c4c4c4" stroke-width="1"/><path d="M51,770.7H67.3" stroke="#c4c4c4" stroke-width="1"/><path d="M61,766.3H67.3" stroke="#c4c4c4" stroke-width="1"/><path d="M61,761.9H67.3" stroke="#c4c4c4" stroke-width="1"/><path d="M61,757.5H67.3" stroke="#c4c4c4" stroke-width="1"/><path d="M61,753.1H67.3" stroke="#c4c4c4" stroke-width="1"/><path d="M56,748.7H67.3" stroke="#c4c4c4" stroke-width="1"/><path d="M61,744.3H67.3" stroke="#c4c4c4" stroke-width="1"/><path d="M61,739.9H67.3" stroke="#c4c4c4" stroke-width="1"/><path d="M61,735.5H67.3" stroke="#c4c4c4" stroke-width="1"/><path d="M61,731.1H67.3" stroke="#c4c4c4" stroke-width="1"/><path d="M51,726.7H67.3" stroke="#c4c4c4" stroke-width="1"/><path d="M61,722.3H67.3" stroke="#c4c4c4" stroke-width="1"/><path d="M61,717.9H67.3" stroke="#c4c4c4" stroke-width="1"/><path d="M61,713.5H67.3" stroke="#c4c4c4" stroke-width="1"/><path d="M61,709.1H67.3" stroke="#c4c4c4" stroke-width="1"/><path d="M56,704.7H67.3" stroke="#c4c4c4" stroke-width="1"/><path d="M61,700.3H67.3" stroke="#c4c4c4" stroke-width="1"/><path d="M61,695.9H67.3" stroke="#c4c4c4" stroke-width="1"/><path d="M61,691.5H67.3" stroke="#c4c4c4" stroke-width="1"/><path d="M61,687.1H67.3" stroke="#c4c4c4" stroke-width="1"/><path d="M51,682.7H67.3" stroke="#c4c4c4" stroke-width="1"/><path d="M61,678.3H67.3" stroke="#c4c4c4" stroke-width="1"/><path d="M61,673.9H67.3" stroke="#c4c4c4" stroke-width="1"/><path d="M61,669.5H67.3" stroke="#c4c4c4" stroke-width="1"/><path d="M61,665.1H67.3" stroke="#c4c4c4" stroke-width="1"/><path d="M56,660.7H67.3" stroke="#c4c4c4" stroke-width="1"/><path d="M61,656.3H67.3" stroke="#c4c4c4" stroke-width="1"/><path d="M61,651.9H67.3" stroke="#c4c4c4" stroke-width="1"/><path d="M61,647.5H67.3" stroke="#c4c4c4" stroke-width="1"/><path d="M61,643.1H67.3" stroke="#c4c4c4" stroke-width="1"/><path d="M51,638.7H67.3" stroke="#c4c4c4" stroke-width="1"/><path d="M61,634.3H67.3" stroke="#c4c4c4" stroke-width="1"/><path d="M61,629.9H67.3" stroke="#c4c4c4" stroke-width="1"/><path d="M61,625.5H67.3" stroke="#c4c4c4" stroke-width="1"/><path d="M61,621.1H67.3" stroke="#c4c4c4" stroke-width="1"/><path d="M56,616.7H67.3" stroke="#c4c4c4" stroke-width="1"/><path d="M61,612.3H67.3" stroke="#c4c4c4" stroke-width="1"/><path d="M61,607.9H67.3" stroke="#c4c4c4" stroke-width="1"/><path d="M61,603.5H67.3" stroke="#c4c4c4" stroke-width="1"/><path d="M61,599.1H67.3" stroke="#c4c4c4" stroke-width="1"/><path d="M51,594.7H67.3" stroke="#c4c4c4" stroke-width="1"/><path d="M61,590.3H67.3" stroke="#c4c4c4" stroke-width="1"/><path d="M61,585.9H67.3" stroke="#c4c4c4" stroke-width="1"/><path d="M61,581.5H67.3" stroke="#c4c4c4" stroke-width="1"/><path d="M61,577.1H67.3" stroke="#c4c4c4" stroke-width="1"/><path d="M56,572.7H67.3" stroke="#c4c4c4" stroke-width="1"/><path d="M61,568.3H67.3" stroke="#c4c4c4" stroke-width="1"/><path d="M61,563.9H67.3" stroke="#c4c4c4" stroke-width="1"/><path d="M61,559.5H67.3" stroke="#c4c4c4" stroke-width="1"/><path d="M61,555.1H67.3" stroke="#c4c4c4" stroke-width="1"/><path d="M51,550.7H67.3" stroke="#c4c4c4" stroke-width="1"/><path d="M61,546.3H67.3" stroke="#c4c4c4" stroke-width="1"/><path d="M61,541.9H67.3" stroke="#c4c4c4" stroke-width="1"/><path d="M61,537.5H67.3" stroke="#c4c4c4" stroke-width="1"/><path d="M61,533.1H67.3" stroke="#c4c4c4" stroke-width="1"/><path d="M56,528.7H67.3" stroke="#c4c4c4" stroke-width="1"/><path d="M61,524.3H67.3" stroke="#c4c4c4" stroke-width="1"/><path d="M61,519.9H67.3" stroke="#c4c4c4" stroke-width="1"/><path d="M61,515.5H67.3" stroke="#c4c4c4" stroke-width="1"/><path d="M61,511.1H67.3" stroke="#c4c4c4" stroke-width="1"/><path d="M51,506.7H67.3" stroke="#c4c4c4" stroke-width="1"/><path d="M61,502.3H67.3" stroke="#c4c4c4" stroke-width="1"/><path d="M61,497.9H67.3" stroke="#c4c4c4" stroke-width="1"/><path d="M61,493.5H67.3" stroke="#c4c4c4" stroke-width="1"/><path d="M61,489.1H67.3" stroke="#c4c4c4" stroke-width="1"/><path d="M56,484.7H67.3" stroke="#c4c4c4" stroke-width="1"/><path d="M61,480.3H67.3" stroke="#c4c4c4" stroke-width="1"/><path d="M61,475.9H67.3" stroke="#c4c4c4" stroke-width="1"/><path d="M61,471.5H67.3" stroke="#c4c4c4" stroke-width="1"/><path d="M61,467.1H67.3" stroke="#c4c4c4" stroke-width="1"/><path d="M51,462.7H67.3" stroke="#c4c4c4" stroke-width="1"/><path d="M61,458.3H67.3" stroke="#c4c4c4" stroke-width="1"/><path d="M61,453.9H67.3" stroke="#c4c4c4" stroke-width="1"/><path d="M61,449.5H67.3" stroke="#c4c4c4" stroke-width="1"/><path d="M61,445.1H67.3" stroke="#c4c4c4" stroke-width="1"/><path d="M56,440.7H67.3" stroke="#c4c4c4" stroke-width="1"/><path d="M61,436.3H67.3" stroke="#c4c4c4" stroke-width="1"/><path d="M61,431.9H67.3" stroke="#c4c4c4" stroke-width="1"/><path d="M61,427.5H67.3" stroke="#c4c4c4" stroke-width="1"/><path d="M61,423.1H67.3" stroke="#c4c4c4" stroke-width="1"/><path d="M51,418.7H67.3" stroke="#c4c4c4" stroke-width="1"/><path d="M61,414.3H67.3" stroke="#c4c4c4" stroke-width="1"/><path d="M61,409.9H67.3" stroke="#c4c4c4" stroke-width="1"/><path d="M61,405.5H67.3" stroke="#c4c4c4" stroke-width="1"/><path d="M61,401.1H67.3" stroke="#c4c4c4" stroke-width="1"/><path d="M56,396.7H67.3" stroke="#c4c4c4" stroke-width="1"/><path d="M61,392.3H67.3" stroke="#c4c4c4" stroke-width="1"/><path d="M61,387.9H67.3" stroke="#c4c4c4" stroke-width="1"/><path d="M61,383.5H67.3" stroke="#c4c4c4" stroke-width="1"/><path d="M61,379.1H67.3" stroke="#c4c4c4" stroke-width="1"/><path d="M51,374.7H67.3" stroke="#c4c4c4" stroke-width="1"/><path d="M61,370.3H67.3" stroke="#c4c4c4" stroke-width="1"/><path d="M61,365.9H67.3" stroke="#c4c4c4" stroke-width="1"/><path d="M61,361.5H67.3" stroke="#c4c4c4" stroke-width="1"/><path d="M61,357.1H67.3" stroke="#c4c4c4" stroke-width="1"/><path d="M56,352.7H67.3" stroke="#c4c4c4" stroke-width="1"/><path d="M61,348.3H67.3" stroke="#c4c4c4" stroke-width="1"/><path d="M61,343.9H67.3" stroke="#c4c4c4" stroke-width="1"/><path d="M61,339.5H67.3" stroke="#c4c4c4" stroke-width="1"/><path d="M61,335.1H67.3" stroke="#c4c4c4" stroke-width="1"/><path d="M51,330.7H67.3" stroke="#c4c4c4" stroke-width="1"/><path d="M61,326.3H67.3" stroke="#c4c4c4" stroke-width="1"/><path d="M61,321.9H67.3" stroke="#c4c4c4" stroke-width="1"/><path d="M61,317.5H67.3" stroke="#c4c4c4" stroke-width="1"/><path d="M61,313.1H67.3" stroke="#c4c4c4" stroke-width="1"/><path d="M56,308.7H67.3" stroke="#c4c4c4" stroke-width="1"/><path d="M61,304.3H67.3" stroke="#c4c4c4" stroke-width="1"/><path d="M61,299.9H67.3" stroke="#c4c4c4" stroke-width="1"/><path d="M61,295.5H67.3" stroke="#c4c4c4" stroke-width="1"/><path d="M61,291.1H67.3" stroke="#c4c4c4" stroke-width="1"/><path d="M51,286.7H67.3" stroke="#c4c4c4" stroke-width="1"/><path d="M61,282.3H67.3" stroke="#c4c4c4" stroke-width="1"/><path d="M61,277.9H67.3" stroke="#c4c4c4" stroke-width="1"/><path d="M61,273.5H67.3" stroke="#c4c4c4" stroke-width="1"/><path d="M61,269.1H67.3" stroke="#c4c4c4" stroke-width="1"/><path d="M56,264.7H67.3" stroke="#c4c4c4" stroke-width="1"/><path d="M61,260.3H67.3" stroke="#c4c4c4" stroke-width="1"/><path d="M61,255.9H67.3" stroke="#c4c4c4" stroke-width="1"/><path d="M61,251.5H67.3" stroke="#c4c4c4" stroke-width="1"/><path d="M61,247.1H67.3" stroke="#c4c4c4" stroke-width="1"/><path d="M51,242.7H67.3" stroke="#c4c4c4" stroke-width="1"/><path d="M61,238.3H67.3" stroke="#c4c4c4" stroke-width="1"/><path d="M61,233.9H67.3" stroke="#c4c4c4" stroke-width="1"/><path d="M61,229.5H67.3" stroke="#c4c4c4" stroke-width="1"/><path d="M61,225.1H67.3" stroke="#c4c4c4" stroke-width="1"/><path d="M56,220.7H67.3" stroke="#c4c4c4" stroke-width="1"/><path d="M61,216.3H67.3" stroke="#c4c4c4" stroke-width="1"/><path d="M61,211.9H67.3" stroke="#c4c4c4" stroke-width="1"/><path d="M61,207.5H67.3" stroke="#c4c4c4" stroke-width="1"/><path d="M61,203.1H67.3" stroke="#c4c4c4" stroke-width="1"/><path d="M51,198.7H67.3" stroke="#c4c4c4" stroke-width="1"/><path d="M61,194.3H67.3" stroke="#c4c4c4" stroke-width="1"/><path d="M61,189.9H67.3" stroke="#c4c4c4" stroke-width="1"/><path d="M61,185.5H67.3" stroke="#c4c4c4" stroke-width="1"/><path d="M61,181.1H67.3" stroke="#c4c4c4" stroke-width="1"/><path d="M56,176.7H67.3" stroke="#c4c4c4" stroke-width="1"/><path d="M61,172.3H67.3" stroke="#c4c4c4" stroke-width="1"/><g font-family="Liberation Sans, DejaVu Sans, sans-serif" font-size="12" fill="#fff" stroke="#fff" stroke-width=".45"><text transform="translate(60,945.5) rotate(-90)">0</text><text transform="translate(60,901.5) rotate(-90)">50</text><text transform="translate(60,857.5) rotate(-90)">100</text><text transform="translate(60,813.5) rotate(-90)">150</text><text transform="translate(60,769.5) rotate(-90)">200</text><text transform="translate(60,725.5) rotate(-90)">250</text><text transform="translate(60,681.5) rotate(-90)">300</text><text transform="translate(60,637.5) rotate(-90)">350</text><text transform="translate(60,593.5) rotate(-90)">400</text><text transform="translate(60,549.5) rotate(-90)">450</text><text transform="translate(60,505.5) rotate(-90)">500</text><text transform="translate(60,461.5) rotate(-90)">550</text><text transform="translate(60,417.5) rotate(-90)">600</text><text transform="translate(60,373.5) rotate(-90)">650</text><text transform="translate(60,329.5) rotate(-90)">700</text><text transform="translate(60,285.5) rotate(-90)">750</text><text transform="translate(60,241.5) rotate(-90)">800</text><text transform="translate(60,197.5) rotate(-90)">850</text></g></g></svg>
<div class="a" style="left:414.3px;top:205px;width:525.5px;height:742px;background:#3a3a92;"></div>
<div class="a" style="left:414.3px;top:205px;width:525.5px;height:1.9px;background:#1a1a68;"></div>
<div class="a" style="left:415.9px;top:206.9px;width:522.7px;height:738.7px;background:#ffffff;"></div>
<div class="a" style="left:938.1px;top:206.9px;width:0.8px;height:738.7px;background:#8a8ac4;"></div>
<div class="t" style="left:645.8px;top:176.1px;-webkit-text-stroke-width:0;font-size:13.7px;color:#f4f4f4">Artboard 1</div>
<svg style="left:1386px;top:380px" width="22" height="22" viewBox="0 0 22 22"><circle cx="10.8" cy="10.6" r="8.4" fill="#3d506c" stroke="#141c28" stroke-width="1"/><path d="M10.6,2.4V18.8M2.6,10.5H19" stroke="#1b283a" stroke-width="1.3"/></svg>
<div class="a" style="left:1531.6px;top:616.5px;width:10px;height:81px;background:#787878;border-radius:5px"></div>
<div class="a" style="left:406.2px;top:209.7px;width:29.7px;height:634.9px;background:#262626;border-radius:8px;box-shadow:0 0 1.5px rgba(0,0,0,.6)"></div>
<svg style="left:0;top:0" width="440" height="850" viewBox="0 0 440 850"><circle cx="415.2" cy="217.8" r="5.6" fill="#555"/><path d="M412.6,215.2L417.8,220.4M417.8,215.2L412.6,220.4" stroke="#0c0c0c" stroke-width="1.8"/><path d="M411.5,362.8H430" stroke="#0e0e0e" stroke-width="1.2"/><path d="M411.5,503.2H430" stroke="#0e0e0e" stroke-width="1.2"/><path d="M411.5,617.5H430" stroke="#0e0e0e" stroke-width="1.2"/><path d="M411.5,756H430" stroke="#0e0e0e" stroke-width="1.2"/><path d="M417.4,233.8 L417.4,245.6 L420.3,243 L422.4,247.4 L424.2,246.5 L422.2,242.3 L425.8,242Z" fill="#d6d6d6"/><path d="M415.6,272 Q416,267.6 417.8,264.8 Q420.6,262.6 425,262.2 M417.8,264.8 L422.3,269" fill="none" stroke="#e6e6e6" stroke-width="1.3" stroke-linejoin="miter"/><circle cx="415.6" cy="272.2" r="1.25" fill="#e6e6e6"/><circle cx="425.2" cy="262.2" r="1.25" fill="#e6e6e6"/><circle cx="422.5" cy="269.2" r="1.25" fill="#e6e6e6"/><defs><radialGradient id="selg" cx="0.5" cy="0.45" r="0.75"><stop offset="0" stop-color="#4180c6"/><stop offset="1" stop-color="#33608f"/></radialGradient></defs><rect x="410" y="282" width="21" height="21" rx="3.5" fill="url(#selg)"/><path d="M421.9,285.4 L417.6,295.4" stroke="#fff" stroke-width="1.3" stroke-linecap="round"/><path d="M414,296.8 H424 L429.2,300.2 H419.6 L417.6,298.5 H414Z" fill="#fff"/><path d="M430,296.0 V301.6 H424.4Z" fill="#9fb8d6"/><rect x="413.6" y="316.4" width="14" height="4.8" rx="1.6" fill="none" stroke="#d8d8d8" stroke-width="1" stroke-dasharray="1.3 0.9"/><path d="M420.6,313V324.6M415.4,318.8H425.8M417.4,315.6L423.8,322M423.8,315.6L417.4,322" stroke="#e0e0e0" stroke-width="0.8"/><path d="M430,322.4 V328.0 H424.4Z" fill="#b8b8b8"/><rect x="410" y="334.2" width="21" height="21" rx="3.5" fill="#0d0d0d"/><rect x="414" y="338.6" width="13" height="12" fill="none" stroke="#f0f0f0" stroke-width="1.6" stroke-dasharray="3 1.6"/><path d="M430,348.4 V354.0 H424.4Z" fill="#b8b8b8"/><path d="M423.2,375.5 L426.6,378.2 L424.8,380.6 L421.4,378Z" fill="#eee"/><path d="M421,378.6 L424.3,381.2 Q423.5,385 417.6,386.2 Q416.8,381 421,378.6Z" fill="none" stroke="#e6e6e6" stroke-width="0.9"/><path d="M417.6,386.2 L421,382" stroke="#e6e6e6" stroke-width="0.8"/><path d="M414.6,376.5 Q413.5,381 416,385.5 Q417,387 418,386" fill="none" stroke="#d0d0d0" stroke-width="0.8"/><path d="M430,384.0 V389.6 H424.4Z" fill="#b8b8b8"/><rect x="414.6" y="401.8" width="12.4" height="10" rx="0.8" fill="#6a6a6a" stroke="#e4e4e4" stroke-width="1.1"/><path d="M430,410.59999999999997 V416.2 H424.4Z" fill="#b8b8b8"/><text x="420.9" y="440" text-anchor="middle" font-family="Liberation Serif, DejaVu Serif, serif" font-size="21.5" fill="#2a2a2a" stroke="#eaeaea" stroke-width="1">T</text><path d="M430,436.4 V442.0 H424.4Z" fill="#b8b8b8"/><circle cx="422.6" cy="456.6" r="5" fill="#808080"/><rect x="413.6" y="455.5" width="8.6" height="8" fill="#8a8a8a"/><path d="M418.6,457.6 L426.2,460 L423.2,461.2 L422.6,464.6Z" fill="#f4f4f4"/><path d="M430,462.59999999999997 V468.2 H424.4Z" fill="#b8b8b8"/><path d="M414.2,490.6 Q415,483 427,479 Q425,488 414.2,490.6Z" fill="#8c8c8c" stroke="#c8c8c8" stroke-width="0.7"/><path d="M416.5,479.5 L425,489.5" stroke="#e6e6e6" stroke-width="1.2"/><circle cx="424.6" cy="489" r="1" fill="#e6e6e6"/><path d="M430,488.8 V494.40000000000003 H424.4Z" fill="#b8b8b8"/><path d="M414,515 Q418,517 420.5,514 Q423.5,517 426.5,516 Q424.5,520.5 427,524.5 Q422,523.5 420,526 Q418,523 414.5,525.5 Q417,520 414,515Z" fill="#8a8a8a" stroke="#b0b0b0" stroke-width="0.6"/><path d="M426.6,513.2 L421.8,521.6" stroke="#fff" stroke-width="1.5"/><circle cx="421.6" cy="521.2" r="1.6" fill="#0e0e0e" stroke="#ddd" stroke-width="0.6"/><path d="M430,524.2 V529.8 H424.4Z" fill="#b8b8b8"/><path d="M420.2,553.8 L416.6,546.8 Q415.2,543 417.6,541 Q420.2,539 422.8,541 Q425.2,543 423.8,546.8Z" fill="none" stroke="#d8d8d8" stroke-width="0.9"/><circle cx="420.2" cy="544" r="1.6" fill="#f0f0f0"/><path d="M420.2,546V552" stroke="#d8d8d8" stroke-width="0.7"/><path d="M430,550.6 V556.1999999999999 H424.4Z" fill="#b8b8b8"/><rect x="414.6" y="568.2" width="12" height="9.6" rx="1.6" fill="none" stroke="#e2e2e2" stroke-width="1.4" stroke-dasharray="1.2 0.7"/><path d="M430,576.8000000000001 V582.4 H424.4Z" fill="#b8b8b8"/><path d="M413.4,596.6 Q420.4,593 427.6,596.6 L425,602.8 Q420.4,601 416,602.8Z" fill="none" stroke="#9c9c9c" stroke-width="0.8"/><path d="M414.4,599 Q420.4,595.6 426.6,599M415.2,601 Q420.4,598 425.8,601M417,595.2L418,602M420.4,594.6V601.6M424,595.2L423,602" fill="none" stroke="#9c9c9c" stroke-width="0.7"/><path d="M430,602.8000000000001 V608.4 H424.4Z" fill="#b8b8b8"/><defs><linearGradient id="gg" x1="0" y1="0" x2="1" y2="0"><stop offset="0" stop-color="#f4f4f4"/><stop offset="1" stop-color="#3a3a3a"/></linearGradient><linearGradient id="gg2" x1="0" y1="0" x2="0" y2="1"><stop offset="0" stop-color="#262626" stop-opacity=".65"/><stop offset="1" stop-color="#262626" stop-opacity="0"/></linearGradient></defs><rect x="413.4" y="627.4" width="14" height="14.4" fill="url(#gg)"/><rect x="413.4" y="627.4" width="14" height="14.4" fill="url(#gg2)"/><path d="M430,637.6 V643.1999999999999 H424.4Z" fill="#b8b8b8"/><rect x="414" y="654.4" width="13" height="12.6" fill="none" stroke="#dcdcdc" stroke-width="1"/><path d="M414,658.5 Q420,661 427,657.5M414,663 Q421,660 427,663.5M418,654.4 Q420,661 417.5,667M423,654.4 Q421,661 423.5,667M414,654.4L427,667" fill="none" stroke="#c8c8c8" stroke-width="0.8"/><path d="M430,664.4000000000001 V670.0 H424.4Z" fill="#b8b8b8"/><path d="M413.6,680.6H427.4" stroke="#e8e8e8" stroke-width="1.9" stroke-dasharray="2.6 0.7" stroke-dashoffset="0"/><path d="M413.6,683.4H427.4" stroke="#e8e8e8" stroke-width="1.9" stroke-dasharray="2.6 0.7" stroke-dashoffset="1.6"/><path d="M413.6,686.2H427.4" stroke="#e8e8e8" stroke-width="1.9" stroke-dasharray="2.6 0.7" stroke-dashoffset="0"/><path d="M413.6,689.0H427.4" stroke="#e8e8e8" stroke-width="1.9" stroke-dasharray="2.6 0.7" stroke-dashoffset="1.6"/><path d="M413.6,691.8000000000001H427.4" stroke="#e8e8e8" stroke-width="1.9" stroke-dasharray="2.6 0.7" stroke-dashoffset="0"/><path d="M430,690.6 V696.1999999999999 H424.4Z" fill="#b8b8b8"/><rect x="413.8" y="706.4" width="13.6" height="13.4" rx="1.8" fill="#6c6c6c" stroke="#8a8a8a" stroke-width="0.8"/><rect x="416" y="708.6" width="9.2" height="9" rx="1" fill="#8e8e8e"/><rect x="418" y="710.8" width="5.2" height="4.6" fill="#d0d0d0" stroke="#555" stroke-width="0.6"/><rect x="413.8" y="731.6" width="8" height="8.6" fill="none" stroke="#e0e0e0" stroke-width="1"/><circle cx="420.6" cy="738.4" r="3.6" fill="#262626" stroke="#e0e0e0" stroke-width="1"/><ellipse cx="423" cy="741.8" rx="4.2" ry="3.6" fill="#262626" stroke="#e0e0e0" stroke-width="1"/><path d="M430,742.8000000000001 V748.4 H424.4Z" fill="#b8b8b8"/><circle cx="420.6" cy="774.8" r="5.4" fill="none" stroke="#f2f2f2" stroke-width="2.6" stroke-dasharray="1.7 0.55"/><path d="M418,777.4L423.2,772.2" stroke="#777" stroke-width="0.9"/><path d="M430,778.2 V783.8 H424.4Z" fill="#b8b8b8"/><path d="M417.6,794.4V798.2M413.6,798.2H417.6" stroke="#cfcfcf" stroke-width="0.9" fill="none"/><path d="M417.8,798.4 H424.6 L427.2,801 V807.4 H417.8Z" fill="none" stroke="#e4e4e4" stroke-width="1.1"/><path d="M430,804.8000000000001 V810.4 H424.4Z" fill="#b8b8b8"/><path d="M421.6,820.6 A6.2,6.2 0 1 1 415.6,830.2" fill="none" stroke="#e8e8e8" stroke-width="1.4"/><path d="M413.2,827 L417.6,829.2 L413.8,832.4Z" fill="#f0f0f0"/><path d="M430,830.2 V835.8 H424.4Z" fill="#b8b8b8"/></svg>
<div class="a" style="left:994.5px;top:157px;width:237.6px;height:810px;background:#262626;border-radius:6px 6px 0 0;box-shadow:0 1px 8px rgba(0,0,0,.55);overflow:hidden"><div class="a" style="left:0;top:0;width:237px;height:21.5px;background:#1b1b1b;border-bottom:1px solid #555"></div><div class="a" style="left:38.4px;top:2.5px;width:87.6px;height:20px;background:#262626;border:1px solid #3c3c3c;border-bottom:0;border-radius:8px 8px 0 0"></div><div class="t" style="left:46px;top:6px">History</div><div class="a" style="left:227px;top:22px;width:11px;height:800px;background:#222"></div><div class="a" style="left:11.5px;top:33px;width:203px;height:14.8px;background:#1f42c1"></div><div class="t" style="left:27px;top:34.6px">Initial State</div><div class="t" style="left:27px;top:48.6px">Change</div><div class="t" style="left:27px;top:62.7px">Path Brush</div><div class="a" style="left:218.6px;top:31px;width:8.2px;height:800px;background:#828282;border-radius:4px 4px 0 0"></div><svg style="left:0;top:0" width="237" height="24" viewBox="0 0 237 24"><circle cx="14.2" cy="11.4" r="6" fill="#4c4c4c"/><path d="M11.5,8.7L16.9,14.1M16.9,8.7L11.5,14.1" stroke="#0c0c0c" stroke-width="1.9"/><path d="M27.8,5V18M31.1,5V18" stroke="#444" stroke-width="1.1"/><rect x="216.8" y="4.4" width="13" height="14.4" rx="2.6" fill="none" stroke="#cfcfcf" stroke-width="1"/><path d="M219.4,8.4H227.2M219.4,11.6H227.2M219.4,14.8H227.2" stroke="#cfcfcf" stroke-width="1"/></svg></div>
<svg style="left:0;top:0;filter:drop-shadow(0 1px 1.5px rgba(0,0,0,.35))" width="1769" height="420" viewBox="0 0 1769 420"><path d="M1364.8,313 L1511.4,199.6" stroke="#f57c00" stroke-width="8.1" stroke-linecap="round"/><path d="M1547.2,171.6 L1494.6,186.4 L1507.6,197.8 L1513.6,205.4 L1518.8,218.8Z" fill="#f57c00" stroke="#f57c00" stroke-width="1" stroke-linejoin="round"/></svg>
<div class="a" style="left:1548px;top:131px;width:209px;height:281.8px;background:#262626;border-radius:0 0 10px 10px"></div>
<div class="a" style="left:1557px;top:139.2px;width:191px;height:1px;background:#393939;"></div>
<div class="a" style="left:1557px;top:188px;width:191px;height:1px;background:#393939;"></div>
<div class="a" style="left:1557px;top:228px;width:191px;height:1px;background:#393939;"></div>
<div class="a" style="left:1557px;top:268px;width:191px;height:1px;background:#393939;"></div>
<div class="a" style="left:1557px;top:308px;width:191px;height:1px;background:#393939;"></div>
<div class="a" style="left:1557px;top:342.6px;width:191px;height:1px;background:#393939;"></div>
<div class="a" style="left:1557px;top:378px;width:191px;height:1px;background:#393939;"></div>
<div class="a" style="left:1556px;top:144px;width:120px;height:8px;overflow:hidden"><div class="t" style="left:2px;top:4.3px">Align Size</div></div>
<svg style="left:0;top:0" width="1769" height="420" viewBox="0 0 1769 420"><rect x="1559.2" y="163.2" width="9.6" height="9.4" fill="#4a4a4a"/><circle cx="1568.5" cy="172" r="5.3" fill="#4a4a4a"/><rect x="1559.2" y="163.2" width="9.6" height="9.4" fill="none" stroke="#8c8c8c"/><circle cx="1568.5" cy="172" r="5.3" fill="none" stroke="#8c8c8c"/><rect x="1588.0" y="163.2" width="9.6" height="9.4" fill="#141414"/><circle cx="1597.3" cy="172" r="5.3" fill="#141414"/><clipPath id="cp79088"><rect x="1588.0" y="163.2" width="9.6" height="9.4"/></clipPath><circle cx="1597.3" cy="172" r="5.3" fill="#4a4a4a" clip-path="url(#cp79088)"/><rect x="1588.0" y="163.2" width="9.6" height="9.4" fill="none" stroke="#8c8c8c"/><circle cx="1597.3" cy="172" r="5.3" fill="none" stroke="#8c8c8c"/><path d="M1616.7,163.2 H1626.3 V167.389 A5.3,5.3 0 1 1 1621.76,172.6 H1616.7Z" fill="#4a4a4a" stroke="#8c8c8c"/><rect x="1645.5" y="163.2" width="9.6" height="9.4" fill="#4a4a4a"/><rect x="1645.5" y="163.2" width="9.6" height="9.4" fill="none" stroke="#8c8c8c"/><circle cx="1654.8" cy="172" r="5.3" fill="#141414"/><circle cx="1654.8" cy="172" r="5.3" fill="none" stroke="#8c8c8c"/><rect x="1674.3" y="163.2" width="9.6" height="9.4" fill="#4a4a4a"/><circle cx="1683.6" cy="172" r="5.3" fill="#141414"/><clipPath id="cp45412"><rect x="1674.3" y="163.2" width="9.6" height="9.4"/></clipPath><circle cx="1683.6" cy="172" r="5.3" fill="#4a4a4a" clip-path="url(#cp45412)"/><rect x="1674.3" y="163.2" width="9.6" height="9.4" fill="none" stroke="#8c8c8c"/><circle cx="1683.6" cy="172" r="5.3" fill="none" stroke="#8c8c8c"/><rect x="1703.0" y="163.2" width="9.6" height="9.4" fill="#141414"/><circle cx="1712.3" cy="172" r="5.3" fill="#141414"/><rect x="1703.0" y="163.2" width="9.6" height="9.4" fill="none" stroke="#8c8c8c"/><circle cx="1712.3" cy="172" r="5.3" fill="none" stroke="#8c8c8c"/><rect x="1731.8" y="163.2" width="9.6" height="9.4" fill="#141414"/><rect x="1731.8" y="163.2" width="9.6" height="9.4" fill="none" stroke="#4a4a4a"/><circle cx="1741.1" cy="172" r="5.3" fill="#141414"/><circle cx="1741.1" cy="172" r="5.3" fill="none" stroke="#8c8c8c"/><path d="M1560.4,216 Q1562.4,208 1568.4,207 Q1575.4,205.5 1576.0,200.5" fill="none" stroke="#8a8a8a"/><rect x="1566.5000000000002" y="205.89999999999998" width="2.6" height="2.6" fill="#262626" stroke="#8a8a8a" stroke-width="0.7"/><circle cx="1573.6000000000001" cy="213.2" r="3.1" fill="none" stroke="#8a8a8a" stroke-width="0.8"/><path d="M1572.0,213.2H1575.2" stroke="#8a8a8a" stroke-width="0.8"/><path d="M1594,216 Q1596,208 1602,207 Q1609,205.5 1609.6,200.5" fill="none" stroke="#8a8a8a"/><rect x="1600.1000000000001" y="205.89999999999998" width="2.6" height="2.6" fill="#262626" stroke="#8a8a8a" stroke-width="0.7"/><circle cx="1607.2" cy="213.2" r="3.1" fill="none" stroke="#8a8a8a" stroke-width="0.8"/><path d="M1605.6,213.2H1608.8M1607.2,211.6V214.8" stroke="#8a8a8a" stroke-width="0.8"/><path d="M1631.5,206.4 A8.8,6.2 0 1 0 1639.5,206.4" fill="none" stroke="#8a8a8a" stroke-width="1.1"/><rect x="1630.8000000000002" y="205.1" width="2.2" height="2.2" fill="#262626" stroke="#8a8a8a" stroke-width="0.7"/><rect x="1638.0" y="205.1" width="2.2" height="2.2" fill="#262626" stroke="#8a8a8a" stroke-width="0.7"/><path d="M1632.5,203.4H1634.9M1638.5,203.4H1636.1" stroke="#8a8a8a" stroke-width="0.8"/><ellipse cx="1669.4" cy="210.6" rx="8.8" ry="6.2" fill="none" stroke="#8a8a8a" stroke-width="1.1"/><rect x="1668.3000000000002" y="203.5" width="2.2" height="2.2" fill="#262626" stroke="#8a8a8a" stroke-width="0.7"/><path d="M1662.4,201.6H1676.4" stroke="#8a8a8a" stroke-width="0.8"/><path d="M1674.6000000000001,200.0L1676.8000000000002,201.6L1674.6000000000001,203.2" fill="none" stroke="#8a8a8a" stroke-width="0.8"/><path d="M1664.2,200.0L1662.0,201.6L1664.2,203.2" fill="none" stroke="#8a8a8a" stroke-width="0.8"/><path d="M1694.4,216 Q1699,204.6 1703,204.6 Q1707,204.6 1711.6,216" fill="none" stroke="#8a8a8a" stroke-width="1.1"/><rect x="1701.9" y="203.70000000000002" width="2.2" height="2.2" fill="#262626" stroke="#8a8a8a" stroke-width="0.7"/><path d="M1696,201.6H1710" stroke="#8a8a8a" stroke-width="0.8"/><path d="M1708.2,200.0L1710.4,201.6L1708.2,203.2" fill="none" stroke="#8a8a8a" stroke-width="0.8"/><path d="M1697.8,200.0L1695.6,201.6L1697.8,203.2" fill="none" stroke="#8a8a8a" stroke-width="0.8"/><path d="M1728.5,216 Q1728.9,207 1732.9,205.4 H1740.9 Q1744.9,207 1745.3000000000002,216" fill="none" stroke="#8a8a8a" stroke-width="1.1"/><rect x="1731.8000000000002" y="204.3" width="2.2" height="2.2" fill="#262626" stroke="#8a8a8a" stroke-width="0.7"/><rect x="1739.8000000000002" y="204.3" width="2.2" height="2.2" fill="#262626" stroke="#8a8a8a" stroke-width="0.7"/><path d="M1729.5,201.6H1734.3000000000002M1744.3000000000002,201.6H1739.5" stroke="#8a8a8a" stroke-width="0.8"/><path d="M1732.5,200.0L1734.7,201.6L1732.5,203.2" fill="none" stroke="#8a8a8a" stroke-width="0.8"/><path d="M1741.3000000000002,200.0L1739.1000000000001,201.6L1741.3000000000002,203.2" fill="none" stroke="#8a8a8a" stroke-width="0.8"/><path d="M1560.4,244.6H1569.4" stroke="#8a8a8a" stroke-dasharray="1.6 1.4"/><path d="M1569.4,244.6H1574.4" stroke="#8a8a8a" stroke-width="1.2"/><path d="M1573.8,243.0L1576.0,244.6L1573.8,246.2" fill="none" stroke="#8a8a8a" stroke-width="0.8"/><path d="M1562.4,252.4H1574.4" stroke="#8a8a8a"/><circle cx="1561.4" cy="252.4" r="1.4" fill="none" stroke="#8a8a8a" stroke-width="0.8"/><rect x="1573.8000000000002" y="251" width="2.8" height="2.8" fill="#8a8a8a"/><path d="M1610,244.6H1601" stroke="#8a8a8a" stroke-dasharray="1.6 1.4"/><path d="M1601,244.6H1596" stroke="#8a8a8a" stroke-width="1.2"/><path d="M1596.6000000000001,243.0L1594.4,244.6L1596.6000000000001,246.2" fill="none" stroke="#8a8a8a" stroke-width="0.8"/><path d="M1596,252.4H1608" stroke="#8a8a8a"/><circle cx="1609" cy="252.4" r="1.4" fill="none" stroke="#8a8a8a" stroke-width="0.8"/><rect x="1593.8" y="251" width="2.8" height="2.8" fill="#8a8a8a"/><path d="M1627.1,256 Q1627.5,248 1629.9,245.6M1643.9,256 Q1643.5,248 1641.1,245.6" fill="none" stroke="#8a8a8a" stroke-width="1.1"/><rect x="1628.8000000000002" y="244.3" width="2.2" height="2.2" fill="#262626" stroke="#8a8a8a" stroke-width="0.7"/><rect x="1634.4" y="244.3" width="2.2" height="2.2" fill="#262626" stroke="#8a8a8a" stroke-width="0.7"/><rect x="1640.0" y="244.3" width="2.2" height="2.2" fill="#262626" stroke="#8a8a8a" stroke-width="0.7"/><path d="M1628.5,241.6H1632.9M1642.5,241.6H1638.1" stroke="#8a8a8a" stroke-width="0.8"/><path d="M1631.1,240.0L1633.3,241.6L1631.1,243.2" fill="none" stroke="#8a8a8a" stroke-width="0.8"/><path d="M1639.9,240.0L1637.7,241.6L1639.9,243.2" fill="none" stroke="#8a8a8a" stroke-width="0.8"/><circle cx="1669.4" cy="250" r="5.6" fill="none" stroke="#8a8a8a" stroke-width="1.2"/><path d="M1661.6000000000001,246 Q1669.4,237.6 1677.2,246" fill="none" stroke="#8a8a8a" stroke-width="1.1"/><path d="M1695,250 Q1697,246.4 1701,248 Q1703,249 1704,245 Q1705,241.6 1709.6,241.8" fill="none" stroke="#8a8a8a" stroke-width="1.1"/><path d="M1695,255.8 Q1702,254.6 1704.6,250.6 Q1707,246 1711,244.6" fill="none" stroke="#8a8a8a" stroke-width="1.1"/><circle cx="1737.7" cy="248.8" r="3.9" fill="none" stroke="#8a8a8a" stroke-width="0.9"/><path d="M1728.1000000000001,240.6L1745.1000000000001,255.6M1745.3000000000002,242.6L1728.3000000000002,257" stroke="#8a8a8a" stroke-width="0.9"/><path d="M1561.0,294 L1568.4,280.6 L1575.4,294" fill="none" stroke="#8a8a8a" stroke-width="1.1"/><rect x="1567.3000000000002" y="279.29999999999995" width="2.2" height="2.2" fill="#262626" stroke="#8a8a8a" stroke-width="0.7"/><rect x="1559.7000000000003" y="292.9" width="2.2" height="2.2" fill="#262626" stroke="#8a8a8a" stroke-width="0.7"/><rect x="1574.5000000000002" y="292.9" width="2.2" height="2.2" fill="#262626" stroke="#8a8a8a" stroke-width="0.7"/><path d="M1595.6,294.4 Q1594,283 1602,282.6 Q1610,283 1608.8,294.4" fill="none" stroke="#8a8a8a" stroke-width="1.1"/><path d="M1594.6,282.4H1606" stroke="#8a8a8a" stroke-width="0.7"/><rect x="1600.9" y="281.29999999999995" width="2.2" height="2.2" fill="#262626" stroke="#8a8a8a" stroke-width="0.7"/><rect x="1594.3000000000002" y="293.5" width="2.2" height="2.2" fill="#262626" stroke="#8a8a8a" stroke-width="0.7"/><rect x="1607.7" y="293.5" width="2.2" height="2.2" fill="#262626" stroke="#8a8a8a" stroke-width="0.7"/><circle cx="1594.2" cy="282.2" r="1" fill="none" stroke="#8a8a8a" stroke-width="0.6"/><circle cx="1606.4" cy="282.2" r="1" fill="none" stroke="#8a8a8a" stroke-width="0.6"/><path d="M1628.1,295 Q1629.5,283 1635.5,282.6 Q1641.5,283 1642.5,295" fill="none" stroke="#8a8a8a" stroke-width="1.1"/><path d="M1629.1,282.4H1641.9" stroke="#8a8a8a" stroke-width="0.7"/><rect x="1634.4" y="281.29999999999995" width="2.2" height="2.2" fill="#262626" stroke="#8a8a8a" stroke-width="0.7"/><rect x="1626.8000000000002" y="293.9" width="2.2" height="2.2" fill="#262626" stroke="#8a8a8a" stroke-width="0.7"/><rect x="1641.6000000000001" y="293.9" width="2.2" height="2.2" fill="#262626" stroke="#8a8a8a" stroke-width="0.7"/><circle cx="1628.7" cy="282.2" r="1" fill="none" stroke="#8a8a8a" stroke-width="0.6"/><circle cx="1642.3" cy="282.2" r="1" fill="none" stroke="#8a8a8a" stroke-width="0.6"/><path d="M1662.0,295.4L1676.8000000000002,281" stroke="#8a8a8a" stroke-width="1.1"/><rect x="1660.7000000000003" y="294.5" width="2.2" height="2.2" fill="#262626" stroke="#8a8a8a" stroke-width="0.7"/><rect x="1675.9" y="279.7" width="2.2" height="2.2" fill="#262626" stroke="#8a8a8a" stroke-width="0.7"/><path d="M1695.6,295.4 Q1696,282 1710,281" fill="none" stroke="#8a8a8a" stroke-width="1.1"/><rect x="1694.3000000000002" y="294.5" width="2.2" height="2.2" fill="#262626" stroke="#8a8a8a" stroke-width="0.7"/><rect x="1709.5" y="279.7" width="2.2" height="2.2" fill="#262626" stroke="#8a8a8a" stroke-width="0.7"/><path d="M1729.5,295.4 Q1730.9,289.4 1736.9,288.4 Q1743.9,287 1744.5,281" fill="none" stroke="#8a8a8a" stroke-width="1.1"/><rect x="1728.2000000000003" y="294.5" width="2.2" height="2.2" fill="#262626" stroke="#8a8a8a" stroke-width="0.7"/><rect x="1743.6000000000001" y="279.7" width="2.2" height="2.2" fill="#262626" stroke="#8a8a8a" stroke-width="0.7"/><path d="M1560.4,366 L1569.6,356.6M1562.6,367 L1570.4,358.8" stroke="#8a8a8a" stroke-width="0.9"/><path d="M1566.4,356.6H1569.8V360" fill="none" stroke="#8a8a8a" stroke-width="0.9"/><path d="M1657,366 L1667,356.6M1658.6,367.6 L1668,358.8" stroke="#8a8a8a" stroke-width="0.9"/><path d="M1657,362.4V366H1660.6" fill="none" stroke="#8a8a8a" stroke-width="0.9"/><path d="M1569.6,390.4 L1559.6,401.4 H1570.4" fill="none" stroke="#6e6e6e" stroke-width="0.9"/><path d="M1564,396.6 Q1566.6,398.4 1566.8,401.4" fill="none" stroke="#6e6e6e" stroke-width="0.8"/><path d="M1656.6,401.6 L1667.4,391.4 V401.6M1661.4,397 L1667.4,398.4" fill="none" stroke="#6e6e6e" stroke-width="0.9"/></svg>
<div class="t" style="left:1564.6px;top:320.2px;color:#b4b4b4;font-size:12px">X</div>
<div class="t" style="left:1662px;top:320.2px;color:#b4b4b4;font-size:12px">Y</div>
<div class="fld" style="left:1578.6px;top:317.4px;width:56.4px;height:16.6px;background:#1b1b1b;color:#b4b4b4;font-size:12.6px;padding-left:3px;-webkit-text-stroke-width:.25px">0.0 pt</div>
<div class="fld" style="left:1676px;top:317.4px;width:56.4px;height:16.6px;background:#1b1b1b;color:#b4b4b4;font-size:12.6px;padding-left:3px;-webkit-text-stroke-width:.25px">0.0 pt</div>
<div class="fld" style="left:1578.6px;top:352px;width:56.4px;height:16.6px;background:#1b1b1b;color:#b4b4b4;font-size:12.6px;padding-left:3px;-webkit-text-stroke-width:.25px">0.0 pt</div>
<div class="fld" style="left:1676px;top:352px;width:56.4px;height:16.6px;background:#1b1b1b;color:#b4b4b4;font-size:12.6px;padding-left:3px;-webkit-text-stroke-width:.25px">0.0 pt</div>
<div class="fld" style="left:1578.6px;top:387px;width:56.4px;height:16.6px;background:#1b1b1b;color:#b4b4b4;font-size:12.6px;padding-left:3px;-webkit-text-stroke-width:.25px">0.0°</div>
<div class="fld" style="left:1676px;top:387px;width:56.4px;height:16.6px;background:#1b1b1b;color:#b4b4b4;font-size:12.6px;padding-left:3px;-webkit-text-stroke-width:.25px">0.0°</div>
<div class="a" style="left:1635.2px;top:387px;width:11.4px;height:16.6px;background:#444;border-radius:4px"><svg width="11.4" height="16.6" viewBox="0 0 12 17" style="left:0;top:0"><path d="M3,7 L6,3.7 L9,7 M3,10 L6,13.3 L9,10" fill="none" stroke="#b0b0b0" stroke-width="1.1"/></svg></div>
<div class="a" style="left:1732.6px;top:387px;width:11.4px;height:16.6px;background:#444;border-radius:4px"><svg width="11.4" height="16.6" viewBox="0 0 12 17" style="left:0;top:0"><path d="M3,7 L6,3.7 L9,7 M3,10 L6,13.3 L9,10" fill="none" stroke="#b0b0b0" stroke-width="1.1"/></svg></div>
<svg style="left:1762px;top:409px" width="8" height="14" viewBox="0 0 8 14"><path d="M1.2,2.6H3.4M1.2,4.7H3.4M1.2,6.8H3.4M1.2,8.9H3.4" stroke="#e0e0e0" stroke-width="0.9"/><path d="M4.6,8.2H8L7,11Z" fill="#ddd"/></svg>
</body></html>
